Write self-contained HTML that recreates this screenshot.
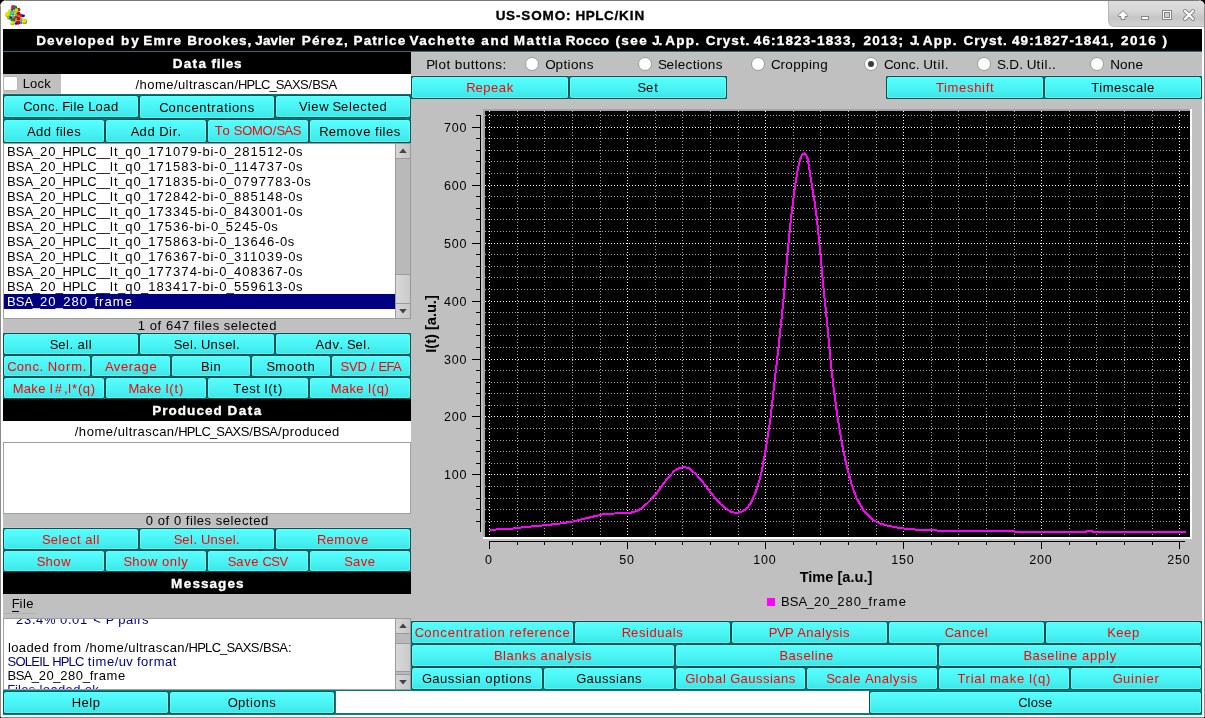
<!DOCTYPE html>
<html><head><meta charset="utf-8"><title>US-SOMO: HPLC/KIN</title>
<style>
html,body{margin:0;padding:0;background:#000;}
body{width:1205px;height:718px;overflow:hidden;position:relative;
font-family:"Liberation Sans",sans-serif;font-size:13px;}
#w{position:absolute;left:0;top:0;width:1205px;height:718px;background:#c0c0c0;overflow:hidden;
border-radius:7px 7px 0 0;will-change:transform;}
#w div,#w svg{position:absolute;box-sizing:border-box;}
.t{white-space:pre;overflow:visible;}
.r{display:inline-block;white-space:pre;text-align:left;overflow:visible;}
.b{background:#007c7c;}
.b i{position:absolute;left:1px;top:1px;right:1px;bottom:1px;border-radius:2.5px;
background:linear-gradient(#6ff 0,#6ff 1px,#56fdfd 1px,#4af4f4 55%,#3ce6e6 100%);
box-shadow:0 0 0 1px #005252,inset 1px 0 0 rgba(120,255,255,.55),inset -1px 0 0 rgba(120,255,255,.55),inset 0 -1px 0 rgba(110,255,255,.5);}
.sb{background:#b9b9b9;border-left:1px solid #9a9a9a;border-right:1px solid #9a9a9a;}
.sbb{background:linear-gradient(90deg,#d6d6d6,#c6c6c6);border:1px solid #9a9a9a;}
.sbt{background:linear-gradient(90deg,#d8d8d8,#cacaca);border:1px solid #9a9a9a;}
</style></head><body><div id="w">

<div style="left:0px;top:0px;width:1205px;height:718px;background:#fff;"></div>
<div style="left:3px;top:29px;width:1199px;height:686px;background:#c0c0c0;"></div>
<div style="left:0px;top:0px;width:1205px;height:1px;background:#7a7a7a;"></div>
<div style="left:0px;top:0px;width:1px;height:718px;background:#8a8a8a;"></div>
<div style="left:1204px;top:0px;width:1px;height:718px;background:#8a8a8a;"></div>
<div style="left:0px;top:717px;width:1205px;height:1px;background:#8a8a8a;"></div>
<div style="left:0px;top:717px;width:1px;height:1px;background:#000;"></div>
<div style="left:1204px;top:717px;width:1px;height:1px;background:#000;"></div>
<div class="t" style="left:420px;top:2px;width:300px;height:28px;line-height:28px;font-size:13.5px;color:#000;text-align:center;font-weight:bold;-webkit-text-stroke:0.35px #000;"><span class="r" style="width:20.07px;letter-spacing:0.66px;text-indent:0.33px">US</span><span class="r" style="width:5.44px;letter-spacing:0.94px;text-indent:0.47px">-</span><span class="r" style="width:44.74px;letter-spacing:0.87px;text-indent:0.44px">SOMO</span><span class="r" style="width:5.24px;letter-spacing:0.74px;text-indent:0.37px">:</span><span class="r" style="width:4.56px"> </span><span class="r" style="width:38.53px;letter-spacing:0.44px;text-indent:0.22px">HPLC</span><span class="r" style="width:4.79px;letter-spacing:1.04px;text-indent:0.52px">/</span><span class="r" style="width:25.99px;letter-spacing:0.91px;text-indent:0.46px">KIN</span></div>
<div style="left:1108px;top:1px;width:96px;height:26px;border-radius:0 0 0 6px;border-left:1px solid #b4b4b4;border-bottom:1px solid #bcbcbc;background:linear-gradient(#dedede 0,#d6d6d6 40%,#c6c6c6 66%,#d2d2d2 100%)"></div>
<svg style="left:1108px;top:1px" width="96" height="26" viewBox="1108 1 96 26">
<path d="M1123 10.5 L1127.6 15.2 L1127.6 16.5 L1125 16.5 L1125 19.5 L1121 19.5 L1121 16.5 L1118.4 16.5 L1118.4 15.2 Z" fill="#fff" stroke="#858585" stroke-width="1" stroke-linejoin="round"/>
<rect x="1141.5" y="16.5" width="7" height="3" fill="#fff" stroke="#858585" stroke-width="1"/>
<rect x="1162.5" y="10.5" width="9" height="9" fill="#fff" stroke="#858585" stroke-width="1"/>
<rect x="1164.5" y="12.5" width="5" height="5" fill="#cfcfcf" stroke="#858585" stroke-width="1"/>
<path d="M1185 11 L1193 19 M1193 11 L1185 19" stroke="#858585" stroke-width="4" stroke-linecap="round"/>
<path d="M1185 11 L1193 19 M1193 11 L1185 19" stroke="#fff" stroke-width="2.2" stroke-linecap="round"/>
</svg>
<svg style="left:0;top:0" width="32" height="29" viewBox="0 0 32 29"><defs>
<radialGradient id="g0" cx="40%" cy="38%" r="65%"><stop offset="0" stop-color="#0000d8"/><stop offset="0.55" stop-color="#0000c8"/><stop offset="1" stop-color="#000076"/></radialGradient>
<radialGradient id="g1" cx="40%" cy="38%" r="65%"><stop offset="0" stop-color="#0000e0"/><stop offset="0.55" stop-color="#0000d0"/><stop offset="1" stop-color="#00007b"/></radialGradient>
<radialGradient id="g2" cx="40%" cy="38%" r="65%"><stop offset="0" stop-color="#0000ee"/><stop offset="0.55" stop-color="#0000dd"/><stop offset="1" stop-color="#000082"/></radialGradient>
<radialGradient id="g3" cx="40%" cy="38%" r="65%"><stop offset="0" stop-color="#00c8c8"/><stop offset="0.55" stop-color="#00baba"/><stop offset="1" stop-color="#006e6e"/></radialGradient>
<radialGradient id="g4" cx="40%" cy="38%" r="65%"><stop offset="0" stop-color="#00d0d0"/><stop offset="0.55" stop-color="#00c1c1"/><stop offset="1" stop-color="#007272"/></radialGradient>
<radialGradient id="g5" cx="40%" cy="38%" r="65%"><stop offset="0" stop-color="#00d8d8"/><stop offset="0.55" stop-color="#00c8c8"/><stop offset="1" stop-color="#007676"/></radialGradient>
<radialGradient id="g6" cx="40%" cy="38%" r="65%"><stop offset="0" stop-color="#00e8e8"/><stop offset="0.55" stop-color="#00d7d7"/><stop offset="1" stop-color="#007f7f"/></radialGradient>
<radialGradient id="g7" cx="40%" cy="38%" r="65%"><stop offset="0" stop-color="#1e8050"/><stop offset="0.55" stop-color="#1b774a"/><stop offset="1" stop-color="#10462c"/></radialGradient>
<radialGradient id="g8" cx="40%" cy="38%" r="65%"><stop offset="0" stop-color="#6070ff"/><stop offset="0.55" stop-color="#5968ed"/><stop offset="1" stop-color="#343d8c"/></radialGradient>
<radialGradient id="g9" cx="40%" cy="38%" r="65%"><stop offset="0" stop-color="#60e060"/><stop offset="0.55" stop-color="#59d059"/><stop offset="1" stop-color="#347b34"/></radialGradient>
<radialGradient id="g10" cx="40%" cy="38%" r="65%"><stop offset="0" stop-color="#d0d000"/><stop offset="0.55" stop-color="#c1c100"/><stop offset="1" stop-color="#727200"/></radialGradient>
<radialGradient id="g11" cx="40%" cy="38%" r="65%"><stop offset="0" stop-color="#d8d800"/><stop offset="0.55" stop-color="#c8c800"/><stop offset="1" stop-color="#767600"/></radialGradient>
<radialGradient id="g12" cx="40%" cy="38%" r="65%"><stop offset="0" stop-color="#e000e0"/><stop offset="0.55" stop-color="#d000d0"/><stop offset="1" stop-color="#7b007b"/></radialGradient>
<radialGradient id="g13" cx="40%" cy="38%" r="65%"><stop offset="0" stop-color="#e0e000"/><stop offset="0.55" stop-color="#d0d000"/><stop offset="1" stop-color="#7b7b00"/></radialGradient>
<radialGradient id="g14" cx="40%" cy="38%" r="65%"><stop offset="0" stop-color="#e8e800"/><stop offset="0.55" stop-color="#d7d700"/><stop offset="1" stop-color="#7f7f00"/></radialGradient>
<radialGradient id="g15" cx="40%" cy="38%" r="65%"><stop offset="0" stop-color="#ee0000"/><stop offset="0.55" stop-color="#dd0000"/><stop offset="1" stop-color="#820000"/></radialGradient>
<radialGradient id="g16" cx="40%" cy="38%" r="65%"><stop offset="0" stop-color="#ee1010"/><stop offset="0.55" stop-color="#dd0e0e"/><stop offset="1" stop-color="#820808"/></radialGradient>
<radialGradient id="g17" cx="40%" cy="38%" r="65%"><stop offset="0" stop-color="#eeee00"/><stop offset="0.55" stop-color="#dddd00"/><stop offset="1" stop-color="#828200"/></radialGradient>
<radialGradient id="g18" cx="40%" cy="38%" r="65%"><stop offset="0" stop-color="#f0f000"/><stop offset="0.55" stop-color="#dfdf00"/><stop offset="1" stop-color="#848400"/></radialGradient>
<radialGradient id="g19" cx="40%" cy="38%" r="65%"><stop offset="0" stop-color="#ff9000"/><stop offset="0.55" stop-color="#ed8500"/><stop offset="1" stop-color="#8c4f00"/></radialGradient>
</defs>
<circle cx="13.1" cy="7" r="2.07" fill="url(#g12)"/>
<circle cx="15" cy="7.9" r="2.3" fill="url(#g7)"/>
<circle cx="18.4" cy="9.6" r="1.955" fill="url(#g16)"/>
<circle cx="12" cy="9.7" r="1.38" fill="url(#g16)"/>
<circle cx="9.8" cy="10.7" r="1.725" fill="url(#g18)"/>
<circle cx="16.5" cy="10.4" r="2.07" fill="url(#g14)"/>
<circle cx="7.9" cy="14.5" r="2.76" fill="url(#g17)"/>
<circle cx="12.3" cy="13" r="2.3" fill="url(#g6)"/>
<circle cx="15.3" cy="13.3" r="1.725" fill="url(#g13)"/>
<circle cx="18.6" cy="13.8" r="1.955" fill="url(#g15)"/>
<circle cx="21.3" cy="15.5" r="1.725" fill="url(#g16)"/>
<circle cx="23.5" cy="15.8" r="1.38" fill="url(#g2)"/>
<circle cx="16.5" cy="15.7" r="1.495" fill="url(#g4)"/>
<circle cx="13.2" cy="16.2" r="1.265" fill="url(#g19)"/>
<circle cx="10.5" cy="17.7" r="1.61" fill="url(#g1)"/>
<circle cx="8.5" cy="18" r="1.38" fill="url(#g11)"/>
<circle cx="15.7" cy="17.4" r="1.495" fill="url(#g16)"/>
<circle cx="18.5" cy="18.4" r="2.07" fill="url(#g15)"/>
<circle cx="21.4" cy="18.7" r="1.15" fill="url(#g19)"/>
<circle cx="13" cy="19.8" r="2.415" fill="url(#g7)"/>
<circle cx="16" cy="20.8" r="1.265" fill="url(#g19)"/>
<circle cx="21" cy="20.5" r="1.265" fill="url(#g5)"/>
<circle cx="24.5" cy="21.4" r="2.645" fill="url(#g17)"/>
<circle cx="18.3" cy="22.6" r="2.07" fill="url(#g15)"/>
<circle cx="12.4" cy="22.9" r="2.185" fill="url(#g17)"/>
<circle cx="16.1" cy="23.4" r="1.265" fill="url(#g0)"/>
<circle cx="21" cy="23" r="1.15" fill="url(#g8)"/>
<circle cx="14.2" cy="11.3" r="0.92" fill="url(#g19)"/>
<circle cx="10.4" cy="15.9" r="0.92" fill="url(#g9)"/>
<circle cx="10.3" cy="19.2" r="1.035" fill="url(#g3)"/>
<circle cx="8.2" cy="17.6" r="1.265" fill="url(#g10)"/>
<circle cx="16.3" cy="18.9" r="0.92" fill="url(#g9)"/>
</svg>
<div style="left:3px;top:29px;width:1199px;height:22px;background:#000;"></div>
<div style="left:3px;top:51px;width:1199px;height:1px;background:#008080;"></div>
<div class="t" style="left:36.20px;top:30px;height:22px;line-height:22px;font-size:13.5px;letter-spacing:1.179px;color:#fff;font-weight:bold;-webkit-text-stroke:0.35px #fff;">Developed</div>
<div class="t" style="left:120.90px;top:30px;height:22px;line-height:22px;font-size:13.5px;letter-spacing:2.015px;color:#fff;font-weight:bold;-webkit-text-stroke:0.35px #fff;">by</div>
<div class="t" style="left:143.30px;top:30px;height:22px;line-height:22px;font-size:13.5px;letter-spacing:1.317px;color:#fff;font-weight:bold;-webkit-text-stroke:0.35px #fff;">Emre</div>
<div class="t" style="left:187.30px;top:30px;height:22px;line-height:22px;font-size:13.5px;letter-spacing:0.883px;color:#fff;font-weight:bold;-webkit-text-stroke:0.35px #fff;">Brookes,</div>
<div class="t" style="left:255.30px;top:30px;height:22px;line-height:22px;font-size:13.5px;letter-spacing:0.135px;color:#fff;font-weight:bold;-webkit-text-stroke:0.35px #fff;">Javier</div>
<div class="t" style="left:301.80px;top:30px;height:22px;line-height:22px;font-size:13.5px;letter-spacing:1.239px;color:#fff;font-weight:bold;-webkit-text-stroke:0.35px #fff;">Pérez,</div>
<div class="t" style="left:353.60px;top:30px;height:22px;line-height:22px;font-size:13.5px;letter-spacing:1.087px;color:#fff;font-weight:bold;-webkit-text-stroke:0.35px #fff;">Patrice</div>
<div class="t" style="left:409.60px;top:30px;height:22px;line-height:22px;font-size:13.5px;letter-spacing:1.378px;color:#fff;font-weight:bold;-webkit-text-stroke:0.35px #fff;">Vachette</div>
<div class="t" style="left:481.30px;top:30px;height:22px;line-height:22px;font-size:13.5px;letter-spacing:1.635px;color:#fff;font-weight:bold;-webkit-text-stroke:0.35px #fff;">and</div>
<div class="t" style="left:513.70px;top:30px;height:22px;line-height:22px;font-size:13.5px;letter-spacing:1.634px;color:#fff;font-weight:bold;-webkit-text-stroke:0.35px #fff;">Mattia</div>
<div class="t" style="left:565.70px;top:30px;height:22px;line-height:22px;font-size:13.5px;letter-spacing:0.495px;color:#fff;font-weight:bold;-webkit-text-stroke:0.35px #fff;">Rocco</div>
<div class="t" style="left:615.40px;top:30px;height:22px;line-height:22px;font-size:13.5px;letter-spacing:1.443px;color:#fff;font-weight:bold;-webkit-text-stroke:0.35px #fff;">(see</div>
<div class="t" style="left:652.30px;top:30px;height:22px;line-height:22px;font-size:13.5px;letter-spacing:-1.404px;color:#fff;font-weight:bold;-webkit-text-stroke:0.35px #fff;">J.</div>
<div class="t" style="left:665.20px;top:30px;height:22px;line-height:22px;font-size:13.5px;letter-spacing:1.233px;color:#fff;font-weight:bold;-webkit-text-stroke:0.35px #fff;">App.</div>
<div class="t" style="left:705.80px;top:30px;height:22px;line-height:22px;font-size:13.5px;letter-spacing:1.017px;color:#fff;font-weight:bold;-webkit-text-stroke:0.35px #fff;">Cryst.</div>
<div class="t" style="left:753.80px;top:30px;height:22px;line-height:22px;font-size:13.5px;letter-spacing:1.143px;color:#fff;font-weight:bold;-webkit-text-stroke:0.35px #fff;">46:1823-1833,</div>
<div class="t" style="left:863.40px;top:30px;height:22px;line-height:22px;font-size:13.5px;letter-spacing:1.258px;color:#fff;font-weight:bold;-webkit-text-stroke:0.35px #fff;">2013;</div>
<div class="t" style="left:909.90px;top:30px;height:22px;line-height:22px;font-size:13.5px;letter-spacing:-1.404px;color:#fff;font-weight:bold;-webkit-text-stroke:0.35px #fff;">J.</div>
<div class="t" style="left:922.80px;top:30px;height:22px;line-height:22px;font-size:13.5px;letter-spacing:1.233px;color:#fff;font-weight:bold;-webkit-text-stroke:0.35px #fff;">App.</div>
<div class="t" style="left:963.40px;top:30px;height:22px;line-height:22px;font-size:13.5px;letter-spacing:1.017px;color:#fff;font-weight:bold;-webkit-text-stroke:0.35px #fff;">Cryst.</div>
<div class="t" style="left:1011.90px;top:30px;height:22px;line-height:22px;font-size:13.5px;letter-spacing:1.143px;color:#fff;font-weight:bold;-webkit-text-stroke:0.35px #fff;">49:1827-1841,</div>
<div class="t" style="left:1121.00px;top:30px;height:22px;line-height:22px;font-size:13.5px;letter-spacing:1.547px;color:#fff;font-weight:bold;-webkit-text-stroke:0.35px #fff;">2016</div>
<div class="t" style="left:1162.50px;top:30px;height:22px;line-height:22px;font-size:13.5px;letter-spacing:1.525px;color:#fff;font-weight:bold;-webkit-text-stroke:0.35px #fff;">)</div>
<div style="left:3px;top:52px;width:408px;height:22px;background:#000;"></div>
<div class="t" style="left:3px;top:53px;width:408px;height:22px;line-height:22px;font-size:13.5px;color:#fff;text-align:center;font-weight:bold;-webkit-text-stroke:0.35px #fff;"><span class="r" style="width:10.79px;letter-spacing:1.04px;text-indent:0.52px">D</span><span class="r" style="width:23.76px;letter-spacing:1.42px;text-indent:0.71px">ata</span><span class="r" style="width:4.53px"> </span><span class="r" style="width:30.65px;letter-spacing:0.73px;text-indent:0.36px">files</span></div>
<div style="left:3px;top:74px;width:58px;height:20px;background:#c0c0c0;"></div>
<div style="left:61px;top:74px;width:350px;height:21px;background:#fff;"></div>
<div style="left:3px;top:76px;width:15px;height:15px;background:#fff;border:1px solid #b4b4b4;border-radius:2px"></div>
<div class="t" style="left:23px;top:74px;width:40px;height:20px;line-height:20px;font-size:13px;color:#000;text-align:left;"><span class="r" style="width:6.80px;letter-spacing:-0.43px;text-indent:-0.22px">L</span><span class="r" style="width:21.24px;letter-spacing:0.34px;text-indent:0.17px">ock</span></div>
<div class="t" style="left:61px;top:74px;width:350px;height:21px;line-height:21px;font-size:13px;color:#000;text-align:center;"><span class="r" style="width:4.09px;letter-spacing:0.48px;text-indent:0.24px">/</span><span class="r" style="width:34.45px;letter-spacing:0.48px;text-indent:0.24px">home</span><span class="r" style="width:4.09px;letter-spacing:0.48px;text-indent:0.24px">/</span><span class="r" style="width:56.43px;letter-spacing:0.41px;text-indent:0.20px">ultrascan</span><span class="r" style="width:4.09px;letter-spacing:0.48px;text-indent:0.24px">/</span><span class="r" style="width:31.72px;letter-spacing:-0.74px;text-indent:-0.37px">HPLC</span><span class="r" style="width:6.08px;letter-spacing:-1.15px;text-indent:-0.58px">_</span><span class="r" style="width:32.29px;letter-spacing:-0.60px;text-indent:-0.30px">SAXS</span><span class="r" style="width:4.09px;letter-spacing:0.48px;text-indent:0.24px">/</span><span class="r" style="width:24.37px;letter-spacing:-0.55px;text-indent:-0.27px">BSA</span></div>
<div style="left:3px;top:93px;width:58px;height:1px;background:#cfc6c6;"></div>
<div style="left:3px;top:332px;width:408px;height:1px;background:#cfc6c6;"></div>
<div style="left:3px;top:527px;width:408px;height:1px;background:#cfc6c6;"></div>
<div style="left:3px;top:94px;width:408px;height:49px;background:#007878;"></div>
<div class="b" style="left:3px;top:95px;width:136px;height:23px"><i></i></div>
<div class="t" style="left:3px;top:95px;width:136px;height:23px;line-height:23px;font-size:13px;color:#000;text-align:center;"><span class="r" style="width:8.73px;letter-spacing:-0.66px;text-indent:-0.33px">C</span><span class="r" style="width:22.44px;letter-spacing:0.49px;text-indent:0.25px">onc</span><span class="r" style="width:3.97px;letter-spacing:0.36px;text-indent:0.18px">.</span><span class="r" style="width:3.97px"> </span><span class="r" style="width:7.19px;letter-spacing:-0.75px;text-indent:-0.38px">F</span><span class="r" style="width:14.64px;letter-spacing:0.54px;text-indent:0.27px">ile</span><span class="r" style="width:3.97px"> </span><span class="r" style="width:6.96px;letter-spacing:-0.26px;text-indent:-0.13px">L</span><span class="r" style="width:23.24px;letter-spacing:0.52px;text-indent:0.26px">oad</span></div>
<div class="b" style="left:139px;top:95px;width:136px;height:24px"><i></i></div>
<div class="t" style="left:139px;top:96px;width:136px;height:24px;line-height:24px;font-size:13px;color:#000;text-align:center;"><span class="r" style="width:8.73px;letter-spacing:-0.66px;text-indent:-0.33px">C</span><span class="r" style="width:86.21px;letter-spacing:0.63px;text-indent:0.31px">oncentrations</span></div>
<div class="b" style="left:275px;top:95px;width:136px;height:23px"><i></i></div>
<div class="t" style="left:275px;top:95px;width:136px;height:23px;line-height:23px;font-size:13px;color:#000;text-align:center;"><span class="r" style="width:8.55px;letter-spacing:-0.12px;text-indent:-0.06px">V</span><span class="r" style="width:21.39px;letter-spacing:0.63px;text-indent:0.31px">iew</span><span class="r" style="width:3.97px"> </span><span class="r" style="width:7.94px;letter-spacing:-0.74px;text-indent:-0.37px">S</span><span class="r" style="width:46.26px;letter-spacing:0.62px;text-indent:0.31px">elected</span></div>
<div class="b" style="left:3px;top:119px;width:102px;height:24px"><i></i></div>
<div class="t" style="left:3px;top:120px;width:102px;height:24px;line-height:24px;font-size:13px;color:#000;text-align:center;"><span class="r" style="width:8.55px;letter-spacing:-0.12px;text-indent:-0.06px">A</span><span class="r" style="width:15.87px;letter-spacing:0.71px;text-indent:0.35px">dd</span><span class="r" style="width:3.97px"> </span><span class="r" style="width:25.55px;letter-spacing:0.49px;text-indent:0.24px">files</span></div>
<div class="b" style="left:105px;top:119px;width:102px;height:24px"><i></i></div>
<div class="t" style="left:105px;top:120px;width:102px;height:24px;line-height:24px;font-size:13px;color:#000;text-align:center;"><span class="r" style="width:8.55px;letter-spacing:-0.12px;text-indent:-0.06px">A</span><span class="r" style="width:15.87px;letter-spacing:0.71px;text-indent:0.35px">dd</span><span class="r" style="width:3.97px"> </span><span class="r" style="width:9.62px;letter-spacing:0.24px;text-indent:0.12px">D</span><span class="r" style="width:8.61px;letter-spacing:0.70px;text-indent:0.35px">ir</span><span class="r" style="width:3.97px;letter-spacing:0.36px;text-indent:0.18px">.</span></div>
<div class="b" style="left:207px;top:119px;width:102px;height:24px"><i></i></div>
<div class="t" style="left:207px;top:119px;width:102px;height:24px;line-height:24px;font-size:13px;color:#f00;text-align:center;"><span class="r" style="width:7.63px;letter-spacing:-0.31px;text-indent:-0.15px">T</span><span class="r" style="width:7.65px;letter-spacing:0.42px;text-indent:0.21px">o</span><span class="r" style="width:3.97px"> </span><span class="r" style="width:38.40px;letter-spacing:-0.33px;text-indent:-0.17px">SOMO</span><span class="r" style="width:4.21px;letter-spacing:0.60px;text-indent:0.30px">/</span><span class="r" style="width:24.65px;letter-spacing:-0.45px;text-indent:-0.23px">SAS</span></div>
<div class="b" style="left:309px;top:119px;width:102px;height:24px"><i></i></div>
<div class="t" style="left:309px;top:120px;width:102px;height:24px;line-height:24px;font-size:13px;color:#000;text-align:center;"><span class="r" style="width:8.69px;letter-spacing:-0.70px;text-indent:-0.35px">R</span><span class="r" style="width:42.61px;letter-spacing:0.72px;text-indent:0.36px">emove</span><span class="r" style="width:3.97px"> </span><span class="r" style="width:25.55px;letter-spacing:0.49px;text-indent:0.24px">files</span></div>
<div style="left:3px;top:143px;width:408px;height:176px;background:#fff;border:1px solid #a0a0a0"></div>
<div style="left:4px;top:294px;width:391px;height:15px;background:#000080;"></div>
<div class="t" style="left:7px;top:144px;width:380px;height:15px;line-height:15px;font-size:13px;color:#000;text-align:left;"><span class="r" style="width:26.08px;letter-spacing:0.02px;text-indent:0.01px">BSA</span><span class="r" style="width:6.50px;letter-spacing:-0.73px;text-indent:-0.36px">_</span><span class="r" style="width:16.54px;letter-spacing:1.04px;text-indent:0.52px">20</span><span class="r" style="width:6.50px;letter-spacing:-0.73px;text-indent:-0.36px">_</span><span class="r" style="width:33.94px;letter-spacing:-0.19px;text-indent:-0.09px">HPLC</span><span class="r" style="width:6.50px;letter-spacing:-0.73px;text-indent:-0.36px">_</span><span class="r" style="width:6.50px;letter-spacing:-0.73px;text-indent:-0.36px">_</span><span class="r" style="width:8.71px;letter-spacing:1.10px;text-indent:0.55px">lt</span><span class="r" style="width:6.50px;letter-spacing:-0.73px;text-indent:-0.36px">_</span><span class="r" style="width:8.25px;letter-spacing:1.02px;text-indent:0.51px">q</span><span class="r" style="width:8.27px;letter-spacing:1.04px;text-indent:0.52px">0</span><span class="r" style="width:6.50px;letter-spacing:-0.73px;text-indent:-0.36px">_</span><span class="r" style="width:49.63px;letter-spacing:1.04px;text-indent:0.52px">171079</span><span class="r" style="width:4.69px;letter-spacing:0.36px;text-indent:0.18px">-</span><span class="r" style="width:11.86px;letter-spacing:0.87px;text-indent:0.44px">bi</span><span class="r" style="width:4.69px;letter-spacing:0.36px;text-indent:0.18px">-</span><span class="r" style="width:8.27px;letter-spacing:1.04px;text-indent:0.52px">0</span><span class="r" style="width:6.50px;letter-spacing:-0.73px;text-indent:-0.36px">_</span><span class="r" style="width:49.63px;letter-spacing:1.04px;text-indent:0.52px">281512</span><span class="r" style="width:4.69px;letter-spacing:0.36px;text-indent:0.18px">-</span><span class="r" style="width:8.27px;letter-spacing:1.04px;text-indent:0.52px">0</span><span class="r" style="width:6.77px;letter-spacing:0.27px;text-indent:0.14px">s</span></div>
<div class="t" style="left:7px;top:159px;width:380px;height:15px;line-height:15px;font-size:13px;color:#000;text-align:left;"><span class="r" style="width:26.08px;letter-spacing:0.02px;text-indent:0.01px">BSA</span><span class="r" style="width:6.50px;letter-spacing:-0.73px;text-indent:-0.36px">_</span><span class="r" style="width:16.54px;letter-spacing:1.04px;text-indent:0.52px">20</span><span class="r" style="width:6.50px;letter-spacing:-0.73px;text-indent:-0.36px">_</span><span class="r" style="width:33.94px;letter-spacing:-0.19px;text-indent:-0.09px">HPLC</span><span class="r" style="width:6.50px;letter-spacing:-0.73px;text-indent:-0.36px">_</span><span class="r" style="width:6.50px;letter-spacing:-0.73px;text-indent:-0.36px">_</span><span class="r" style="width:8.71px;letter-spacing:1.10px;text-indent:0.55px">lt</span><span class="r" style="width:6.50px;letter-spacing:-0.73px;text-indent:-0.36px">_</span><span class="r" style="width:8.25px;letter-spacing:1.02px;text-indent:0.51px">q</span><span class="r" style="width:8.27px;letter-spacing:1.04px;text-indent:0.52px">0</span><span class="r" style="width:6.50px;letter-spacing:-0.73px;text-indent:-0.36px">_</span><span class="r" style="width:49.63px;letter-spacing:1.04px;text-indent:0.52px">171583</span><span class="r" style="width:4.69px;letter-spacing:0.36px;text-indent:0.18px">-</span><span class="r" style="width:11.86px;letter-spacing:0.87px;text-indent:0.44px">bi</span><span class="r" style="width:4.69px;letter-spacing:0.36px;text-indent:0.18px">-</span><span class="r" style="width:8.27px;letter-spacing:1.04px;text-indent:0.52px">0</span><span class="r" style="width:6.50px;letter-spacing:-0.73px;text-indent:-0.36px">_</span><span class="r" style="width:49.63px;letter-spacing:1.20px;text-indent:0.60px">114737</span><span class="r" style="width:4.69px;letter-spacing:0.36px;text-indent:0.18px">-</span><span class="r" style="width:8.27px;letter-spacing:1.04px;text-indent:0.52px">0</span><span class="r" style="width:6.77px;letter-spacing:0.27px;text-indent:0.14px">s</span></div>
<div class="t" style="left:7px;top:174px;width:380px;height:15px;line-height:15px;font-size:13px;color:#000;text-align:left;"><span class="r" style="width:26.08px;letter-spacing:0.02px;text-indent:0.01px">BSA</span><span class="r" style="width:6.50px;letter-spacing:-0.73px;text-indent:-0.36px">_</span><span class="r" style="width:16.54px;letter-spacing:1.04px;text-indent:0.52px">20</span><span class="r" style="width:6.50px;letter-spacing:-0.73px;text-indent:-0.36px">_</span><span class="r" style="width:33.94px;letter-spacing:-0.19px;text-indent:-0.09px">HPLC</span><span class="r" style="width:6.50px;letter-spacing:-0.73px;text-indent:-0.36px">_</span><span class="r" style="width:6.50px;letter-spacing:-0.73px;text-indent:-0.36px">_</span><span class="r" style="width:8.71px;letter-spacing:1.10px;text-indent:0.55px">lt</span><span class="r" style="width:6.50px;letter-spacing:-0.73px;text-indent:-0.36px">_</span><span class="r" style="width:8.25px;letter-spacing:1.02px;text-indent:0.51px">q</span><span class="r" style="width:8.27px;letter-spacing:1.04px;text-indent:0.52px">0</span><span class="r" style="width:6.50px;letter-spacing:-0.73px;text-indent:-0.36px">_</span><span class="r" style="width:49.63px;letter-spacing:1.04px;text-indent:0.52px">171835</span><span class="r" style="width:4.69px;letter-spacing:0.36px;text-indent:0.18px">-</span><span class="r" style="width:11.86px;letter-spacing:0.87px;text-indent:0.44px">bi</span><span class="r" style="width:4.69px;letter-spacing:0.36px;text-indent:0.18px">-</span><span class="r" style="width:8.27px;letter-spacing:1.04px;text-indent:0.52px">0</span><span class="r" style="width:6.50px;letter-spacing:-0.73px;text-indent:-0.36px">_</span><span class="r" style="width:57.90px;letter-spacing:1.04px;text-indent:0.52px">0797783</span><span class="r" style="width:4.69px;letter-spacing:0.36px;text-indent:0.18px">-</span><span class="r" style="width:8.27px;letter-spacing:1.04px;text-indent:0.52px">0</span><span class="r" style="width:6.77px;letter-spacing:0.27px;text-indent:0.14px">s</span></div>
<div class="t" style="left:7px;top:189px;width:380px;height:15px;line-height:15px;font-size:13px;color:#000;text-align:left;"><span class="r" style="width:26.08px;letter-spacing:0.02px;text-indent:0.01px">BSA</span><span class="r" style="width:6.50px;letter-spacing:-0.73px;text-indent:-0.36px">_</span><span class="r" style="width:16.54px;letter-spacing:1.04px;text-indent:0.52px">20</span><span class="r" style="width:6.50px;letter-spacing:-0.73px;text-indent:-0.36px">_</span><span class="r" style="width:33.94px;letter-spacing:-0.19px;text-indent:-0.09px">HPLC</span><span class="r" style="width:6.50px;letter-spacing:-0.73px;text-indent:-0.36px">_</span><span class="r" style="width:6.50px;letter-spacing:-0.73px;text-indent:-0.36px">_</span><span class="r" style="width:8.71px;letter-spacing:1.10px;text-indent:0.55px">lt</span><span class="r" style="width:6.50px;letter-spacing:-0.73px;text-indent:-0.36px">_</span><span class="r" style="width:8.25px;letter-spacing:1.02px;text-indent:0.51px">q</span><span class="r" style="width:8.27px;letter-spacing:1.04px;text-indent:0.52px">0</span><span class="r" style="width:6.50px;letter-spacing:-0.73px;text-indent:-0.36px">_</span><span class="r" style="width:49.63px;letter-spacing:1.04px;text-indent:0.52px">172842</span><span class="r" style="width:4.69px;letter-spacing:0.36px;text-indent:0.18px">-</span><span class="r" style="width:11.86px;letter-spacing:0.87px;text-indent:0.44px">bi</span><span class="r" style="width:4.69px;letter-spacing:0.36px;text-indent:0.18px">-</span><span class="r" style="width:8.27px;letter-spacing:1.04px;text-indent:0.52px">0</span><span class="r" style="width:6.50px;letter-spacing:-0.73px;text-indent:-0.36px">_</span><span class="r" style="width:49.63px;letter-spacing:1.04px;text-indent:0.52px">885148</span><span class="r" style="width:4.69px;letter-spacing:0.36px;text-indent:0.18px">-</span><span class="r" style="width:8.27px;letter-spacing:1.04px;text-indent:0.52px">0</span><span class="r" style="width:6.77px;letter-spacing:0.27px;text-indent:0.14px">s</span></div>
<div class="t" style="left:7px;top:204px;width:380px;height:15px;line-height:15px;font-size:13px;color:#000;text-align:left;"><span class="r" style="width:26.08px;letter-spacing:0.02px;text-indent:0.01px">BSA</span><span class="r" style="width:6.50px;letter-spacing:-0.73px;text-indent:-0.36px">_</span><span class="r" style="width:16.54px;letter-spacing:1.04px;text-indent:0.52px">20</span><span class="r" style="width:6.50px;letter-spacing:-0.73px;text-indent:-0.36px">_</span><span class="r" style="width:33.94px;letter-spacing:-0.19px;text-indent:-0.09px">HPLC</span><span class="r" style="width:6.50px;letter-spacing:-0.73px;text-indent:-0.36px">_</span><span class="r" style="width:6.50px;letter-spacing:-0.73px;text-indent:-0.36px">_</span><span class="r" style="width:8.71px;letter-spacing:1.10px;text-indent:0.55px">lt</span><span class="r" style="width:6.50px;letter-spacing:-0.73px;text-indent:-0.36px">_</span><span class="r" style="width:8.25px;letter-spacing:1.02px;text-indent:0.51px">q</span><span class="r" style="width:8.27px;letter-spacing:1.04px;text-indent:0.52px">0</span><span class="r" style="width:6.50px;letter-spacing:-0.73px;text-indent:-0.36px">_</span><span class="r" style="width:49.63px;letter-spacing:1.04px;text-indent:0.52px">173345</span><span class="r" style="width:4.69px;letter-spacing:0.36px;text-indent:0.18px">-</span><span class="r" style="width:11.86px;letter-spacing:0.87px;text-indent:0.44px">bi</span><span class="r" style="width:4.69px;letter-spacing:0.36px;text-indent:0.18px">-</span><span class="r" style="width:8.27px;letter-spacing:1.04px;text-indent:0.52px">0</span><span class="r" style="width:6.50px;letter-spacing:-0.73px;text-indent:-0.36px">_</span><span class="r" style="width:49.63px;letter-spacing:1.04px;text-indent:0.52px">843001</span><span class="r" style="width:4.69px;letter-spacing:0.36px;text-indent:0.18px">-</span><span class="r" style="width:8.27px;letter-spacing:1.04px;text-indent:0.52px">0</span><span class="r" style="width:6.77px;letter-spacing:0.27px;text-indent:0.14px">s</span></div>
<div class="t" style="left:7px;top:219px;width:380px;height:15px;line-height:15px;font-size:13px;color:#000;text-align:left;"><span class="r" style="width:26.08px;letter-spacing:0.02px;text-indent:0.01px">BSA</span><span class="r" style="width:6.50px;letter-spacing:-0.73px;text-indent:-0.36px">_</span><span class="r" style="width:16.54px;letter-spacing:1.04px;text-indent:0.52px">20</span><span class="r" style="width:6.50px;letter-spacing:-0.73px;text-indent:-0.36px">_</span><span class="r" style="width:33.94px;letter-spacing:-0.19px;text-indent:-0.09px">HPLC</span><span class="r" style="width:6.50px;letter-spacing:-0.73px;text-indent:-0.36px">_</span><span class="r" style="width:6.50px;letter-spacing:-0.73px;text-indent:-0.36px">_</span><span class="r" style="width:8.71px;letter-spacing:1.10px;text-indent:0.55px">lt</span><span class="r" style="width:6.50px;letter-spacing:-0.73px;text-indent:-0.36px">_</span><span class="r" style="width:8.25px;letter-spacing:1.02px;text-indent:0.51px">q</span><span class="r" style="width:8.27px;letter-spacing:1.04px;text-indent:0.52px">0</span><span class="r" style="width:6.50px;letter-spacing:-0.73px;text-indent:-0.36px">_</span><span class="r" style="width:41.36px;letter-spacing:1.04px;text-indent:0.52px">17536</span><span class="r" style="width:4.69px;letter-spacing:0.36px;text-indent:0.18px">-</span><span class="r" style="width:11.86px;letter-spacing:0.87px;text-indent:0.44px">bi</span><span class="r" style="width:4.69px;letter-spacing:0.36px;text-indent:0.18px">-</span><span class="r" style="width:8.27px;letter-spacing:1.04px;text-indent:0.52px">0</span><span class="r" style="width:6.50px;letter-spacing:-0.73px;text-indent:-0.36px">_</span><span class="r" style="width:33.09px;letter-spacing:1.04px;text-indent:0.52px">5245</span><span class="r" style="width:4.69px;letter-spacing:0.36px;text-indent:0.18px">-</span><span class="r" style="width:8.27px;letter-spacing:1.04px;text-indent:0.52px">0</span><span class="r" style="width:6.77px;letter-spacing:0.27px;text-indent:0.14px">s</span></div>
<div class="t" style="left:7px;top:234px;width:380px;height:15px;line-height:15px;font-size:13px;color:#000;text-align:left;"><span class="r" style="width:26.08px;letter-spacing:0.02px;text-indent:0.01px">BSA</span><span class="r" style="width:6.50px;letter-spacing:-0.73px;text-indent:-0.36px">_</span><span class="r" style="width:16.54px;letter-spacing:1.04px;text-indent:0.52px">20</span><span class="r" style="width:6.50px;letter-spacing:-0.73px;text-indent:-0.36px">_</span><span class="r" style="width:33.94px;letter-spacing:-0.19px;text-indent:-0.09px">HPLC</span><span class="r" style="width:6.50px;letter-spacing:-0.73px;text-indent:-0.36px">_</span><span class="r" style="width:6.50px;letter-spacing:-0.73px;text-indent:-0.36px">_</span><span class="r" style="width:8.71px;letter-spacing:1.10px;text-indent:0.55px">lt</span><span class="r" style="width:6.50px;letter-spacing:-0.73px;text-indent:-0.36px">_</span><span class="r" style="width:8.25px;letter-spacing:1.02px;text-indent:0.51px">q</span><span class="r" style="width:8.27px;letter-spacing:1.04px;text-indent:0.52px">0</span><span class="r" style="width:6.50px;letter-spacing:-0.73px;text-indent:-0.36px">_</span><span class="r" style="width:49.63px;letter-spacing:1.04px;text-indent:0.52px">175863</span><span class="r" style="width:4.69px;letter-spacing:0.36px;text-indent:0.18px">-</span><span class="r" style="width:11.86px;letter-spacing:0.87px;text-indent:0.44px">bi</span><span class="r" style="width:4.69px;letter-spacing:0.36px;text-indent:0.18px">-</span><span class="r" style="width:8.27px;letter-spacing:1.04px;text-indent:0.52px">0</span><span class="r" style="width:6.50px;letter-spacing:-0.73px;text-indent:-0.36px">_</span><span class="r" style="width:41.36px;letter-spacing:1.04px;text-indent:0.52px">13646</span><span class="r" style="width:4.69px;letter-spacing:0.36px;text-indent:0.18px">-</span><span class="r" style="width:8.27px;letter-spacing:1.04px;text-indent:0.52px">0</span><span class="r" style="width:6.77px;letter-spacing:0.27px;text-indent:0.14px">s</span></div>
<div class="t" style="left:7px;top:249px;width:380px;height:15px;line-height:15px;font-size:13px;color:#000;text-align:left;"><span class="r" style="width:26.08px;letter-spacing:0.02px;text-indent:0.01px">BSA</span><span class="r" style="width:6.50px;letter-spacing:-0.73px;text-indent:-0.36px">_</span><span class="r" style="width:16.54px;letter-spacing:1.04px;text-indent:0.52px">20</span><span class="r" style="width:6.50px;letter-spacing:-0.73px;text-indent:-0.36px">_</span><span class="r" style="width:33.94px;letter-spacing:-0.19px;text-indent:-0.09px">HPLC</span><span class="r" style="width:6.50px;letter-spacing:-0.73px;text-indent:-0.36px">_</span><span class="r" style="width:6.50px;letter-spacing:-0.73px;text-indent:-0.36px">_</span><span class="r" style="width:8.71px;letter-spacing:1.10px;text-indent:0.55px">lt</span><span class="r" style="width:6.50px;letter-spacing:-0.73px;text-indent:-0.36px">_</span><span class="r" style="width:8.25px;letter-spacing:1.02px;text-indent:0.51px">q</span><span class="r" style="width:8.27px;letter-spacing:1.04px;text-indent:0.52px">0</span><span class="r" style="width:6.50px;letter-spacing:-0.73px;text-indent:-0.36px">_</span><span class="r" style="width:49.63px;letter-spacing:1.04px;text-indent:0.52px">176367</span><span class="r" style="width:4.69px;letter-spacing:0.36px;text-indent:0.18px">-</span><span class="r" style="width:11.86px;letter-spacing:0.87px;text-indent:0.44px">bi</span><span class="r" style="width:4.69px;letter-spacing:0.36px;text-indent:0.18px">-</span><span class="r" style="width:8.27px;letter-spacing:1.04px;text-indent:0.52px">0</span><span class="r" style="width:6.50px;letter-spacing:-0.73px;text-indent:-0.36px">_</span><span class="r" style="width:49.63px;letter-spacing:1.20px;text-indent:0.60px">311039</span><span class="r" style="width:4.69px;letter-spacing:0.36px;text-indent:0.18px">-</span><span class="r" style="width:8.27px;letter-spacing:1.04px;text-indent:0.52px">0</span><span class="r" style="width:6.77px;letter-spacing:0.27px;text-indent:0.14px">s</span></div>
<div class="t" style="left:7px;top:264px;width:380px;height:15px;line-height:15px;font-size:13px;color:#000;text-align:left;"><span class="r" style="width:26.08px;letter-spacing:0.02px;text-indent:0.01px">BSA</span><span class="r" style="width:6.50px;letter-spacing:-0.73px;text-indent:-0.36px">_</span><span class="r" style="width:16.54px;letter-spacing:1.04px;text-indent:0.52px">20</span><span class="r" style="width:6.50px;letter-spacing:-0.73px;text-indent:-0.36px">_</span><span class="r" style="width:33.94px;letter-spacing:-0.19px;text-indent:-0.09px">HPLC</span><span class="r" style="width:6.50px;letter-spacing:-0.73px;text-indent:-0.36px">_</span><span class="r" style="width:6.50px;letter-spacing:-0.73px;text-indent:-0.36px">_</span><span class="r" style="width:8.71px;letter-spacing:1.10px;text-indent:0.55px">lt</span><span class="r" style="width:6.50px;letter-spacing:-0.73px;text-indent:-0.36px">_</span><span class="r" style="width:8.25px;letter-spacing:1.02px;text-indent:0.51px">q</span><span class="r" style="width:8.27px;letter-spacing:1.04px;text-indent:0.52px">0</span><span class="r" style="width:6.50px;letter-spacing:-0.73px;text-indent:-0.36px">_</span><span class="r" style="width:49.63px;letter-spacing:1.04px;text-indent:0.52px">177374</span><span class="r" style="width:4.69px;letter-spacing:0.36px;text-indent:0.18px">-</span><span class="r" style="width:11.86px;letter-spacing:0.87px;text-indent:0.44px">bi</span><span class="r" style="width:4.69px;letter-spacing:0.36px;text-indent:0.18px">-</span><span class="r" style="width:8.27px;letter-spacing:1.04px;text-indent:0.52px">0</span><span class="r" style="width:6.50px;letter-spacing:-0.73px;text-indent:-0.36px">_</span><span class="r" style="width:49.63px;letter-spacing:1.04px;text-indent:0.52px">408367</span><span class="r" style="width:4.69px;letter-spacing:0.36px;text-indent:0.18px">-</span><span class="r" style="width:8.27px;letter-spacing:1.04px;text-indent:0.52px">0</span><span class="r" style="width:6.77px;letter-spacing:0.27px;text-indent:0.14px">s</span></div>
<div class="t" style="left:7px;top:279px;width:380px;height:15px;line-height:15px;font-size:13px;color:#000;text-align:left;"><span class="r" style="width:26.08px;letter-spacing:0.02px;text-indent:0.01px">BSA</span><span class="r" style="width:6.50px;letter-spacing:-0.73px;text-indent:-0.36px">_</span><span class="r" style="width:16.54px;letter-spacing:1.04px;text-indent:0.52px">20</span><span class="r" style="width:6.50px;letter-spacing:-0.73px;text-indent:-0.36px">_</span><span class="r" style="width:33.94px;letter-spacing:-0.19px;text-indent:-0.09px">HPLC</span><span class="r" style="width:6.50px;letter-spacing:-0.73px;text-indent:-0.36px">_</span><span class="r" style="width:6.50px;letter-spacing:-0.73px;text-indent:-0.36px">_</span><span class="r" style="width:8.71px;letter-spacing:1.10px;text-indent:0.55px">lt</span><span class="r" style="width:6.50px;letter-spacing:-0.73px;text-indent:-0.36px">_</span><span class="r" style="width:8.25px;letter-spacing:1.02px;text-indent:0.51px">q</span><span class="r" style="width:8.27px;letter-spacing:1.04px;text-indent:0.52px">0</span><span class="r" style="width:6.50px;letter-spacing:-0.73px;text-indent:-0.36px">_</span><span class="r" style="width:49.63px;letter-spacing:1.04px;text-indent:0.52px">183417</span><span class="r" style="width:4.69px;letter-spacing:0.36px;text-indent:0.18px">-</span><span class="r" style="width:11.86px;letter-spacing:0.87px;text-indent:0.44px">bi</span><span class="r" style="width:4.69px;letter-spacing:0.36px;text-indent:0.18px">-</span><span class="r" style="width:8.27px;letter-spacing:1.04px;text-indent:0.52px">0</span><span class="r" style="width:6.50px;letter-spacing:-0.73px;text-indent:-0.36px">_</span><span class="r" style="width:49.63px;letter-spacing:1.04px;text-indent:0.52px">559613</span><span class="r" style="width:4.69px;letter-spacing:0.36px;text-indent:0.18px">-</span><span class="r" style="width:8.27px;letter-spacing:1.04px;text-indent:0.52px">0</span><span class="r" style="width:6.77px;letter-spacing:0.27px;text-indent:0.14px">s</span></div>
<div class="t" style="left:7px;top:294px;width:380px;height:15px;line-height:15px;font-size:13px;color:#fff;text-align:left;"><span class="r" style="width:26.08px;letter-spacing:0.02px;text-indent:0.01px">BSA</span><span class="r" style="width:6.50px;letter-spacing:-0.73px;text-indent:-0.36px">_</span><span class="r" style="width:16.54px;letter-spacing:1.04px;text-indent:0.52px">20</span><span class="r" style="width:6.50px;letter-spacing:-0.73px;text-indent:-0.36px">_</span><span class="r" style="width:24.81px;letter-spacing:1.04px;text-indent:0.52px">280</span><span class="r" style="width:6.50px;letter-spacing:-0.73px;text-indent:-0.36px">_</span><span class="r" style="width:38.55px;letter-spacing:1.06px;text-indent:0.53px">frame</span></div>
<div class="sb" style="left:395px;top:143px;width:16px;height:176px"></div>
<div class="sbb" style="left:395px;top:143px;width:16px;height:16px"></div>
<div class="sbb" style="left:395px;top:303px;width:16px;height:16px"></div>
<div class="sbt" style="left:395px;top:274px;width:16px;height:30px"></div>
<svg style="left:395px;top:143px" width="16" height="16"><path d="M4.2 10 L11.8 10 L8 5.6 Z" fill="#444"/></svg>
<svg style="left:395px;top:303px" width="16" height="16"><path d="M4.2 6 L11.8 6 L8 10.4 Z" fill="#444"/></svg>
<div class="t" style="left:3px;top:319px;width:408px;height:14px;line-height:14px;font-size:13px;color:#000;text-align:center;"><span class="r" style="width:8.03px;letter-spacing:0.80px;text-indent:0.40px">1</span><span class="r" style="width:4.01px"> </span><span class="r" style="width:12.16px;letter-spacing:0.66px;text-indent:0.33px">of</span><span class="r" style="width:4.01px"> </span><span class="r" style="width:24.09px;letter-spacing:0.80px;text-indent:0.40px">647</span><span class="r" style="width:4.01px"> </span><span class="r" style="width:25.79px;letter-spacing:0.54px;text-indent:0.27px">files</span><span class="r" style="width:4.01px"> </span><span class="r" style="width:53.27px;letter-spacing:0.61px;text-indent:0.30px">selected</span></div>
<div class="b" style="left:3px;top:333px;width:136px;height:22px"><i></i></div>
<div class="t" style="left:3px;top:334px;width:136px;height:22px;line-height:22px;font-size:13px;color:#000;text-align:center;"><span class="r" style="width:7.94px;letter-spacing:-0.74px;text-indent:-0.37px">S</span><span class="r" style="width:11.16px;letter-spacing:0.52px;text-indent:0.26px">el</span><span class="r" style="width:3.97px;letter-spacing:0.36px;text-indent:0.18px">.</span><span class="r" style="width:3.97px"> </span><span class="r" style="width:14.61px;letter-spacing:0.53px;text-indent:0.27px">all</span></div>
<div class="b" style="left:139px;top:333px;width:136px;height:22px"><i></i></div>
<div class="t" style="left:139px;top:334px;width:136px;height:22px;line-height:22px;font-size:13px;color:#000;text-align:center;"><span class="r" style="width:7.94px;letter-spacing:-0.74px;text-indent:-0.37px">S</span><span class="r" style="width:11.16px;letter-spacing:0.52px;text-indent:0.26px">el</span><span class="r" style="width:3.97px;letter-spacing:0.36px;text-indent:0.18px">.</span><span class="r" style="width:3.97px"> </span><span class="r" style="width:9.15px;letter-spacing:-0.24px;text-indent:-0.12px">U</span><span class="r" style="width:25.60px;letter-spacing:0.44px;text-indent:0.22px">nsel</span><span class="r" style="width:3.97px;letter-spacing:0.36px;text-indent:0.18px">.</span></div>
<div class="b" style="left:275px;top:333px;width:136px;height:22px"><i></i></div>
<div class="t" style="left:275px;top:334px;width:136px;height:22px;line-height:22px;font-size:13px;color:#000;text-align:center;"><span class="r" style="width:8.55px;letter-spacing:-0.12px;text-indent:-0.06px">A</span><span class="r" style="width:15.33px;letter-spacing:0.80px;text-indent:0.40px">dv</span><span class="r" style="width:3.97px;letter-spacing:0.36px;text-indent:0.18px">.</span><span class="r" style="width:3.97px"> </span><span class="r" style="width:7.94px;letter-spacing:-0.74px;text-indent:-0.37px">S</span><span class="r" style="width:11.16px;letter-spacing:0.52px;text-indent:0.26px">el</span><span class="r" style="width:3.97px;letter-spacing:0.36px;text-indent:0.18px">.</span></div>
<div class="b" style="left:3px;top:355px;width:88px;height:22px"><i></i></div>
<div class="t" style="left:3px;top:356px;width:88px;height:22px;line-height:22px;font-size:13px;color:#f00;text-align:center;"><span class="r" style="width:8.97px;letter-spacing:-0.42px;text-indent:-0.21px">C</span><span class="r" style="width:23.07px;letter-spacing:0.70px;text-indent:0.35px">onc</span><span class="r" style="width:4.08px;letter-spacing:0.47px;text-indent:0.24px">.</span><span class="r" style="width:4.08px"> </span><span class="r" style="width:9.61px;letter-spacing:0.22px;text-indent:0.11px">N</span><span class="r" style="width:25.44px;letter-spacing:1.02px;text-indent:0.51px">orm</span><span class="r" style="width:4.08px;letter-spacing:0.47px;text-indent:0.24px">.</span></div>
<div class="b" style="left:91px;top:355px;width:80px;height:22px"><i></i></div>
<div class="t" style="left:91px;top:356px;width:80px;height:22px;line-height:22px;font-size:13px;color:#f00;text-align:center;"><span class="r" style="width:8.55px;letter-spacing:-0.12px;text-indent:-0.06px">A</span><span class="r" style="width:43.52px;letter-spacing:0.63px;text-indent:0.31px">verage</span></div>
<div class="b" style="left:171px;top:355px;width:80px;height:22px"><i></i></div>
<div class="t" style="left:171px;top:356px;width:80px;height:22px;line-height:22px;font-size:13px;color:#000;text-align:center;"><span class="r" style="width:8.58px;letter-spacing:-0.10px;text-indent:-0.05px">B</span><span class="r" style="width:11.39px;letter-spacing:0.64px;text-indent:0.32px">in</span></div>
<div class="b" style="left:251px;top:355px;width:80px;height:22px"><i></i></div>
<div class="t" style="left:251px;top:356px;width:80px;height:22px;line-height:22px;font-size:13px;color:#000;text-align:center;"><span class="r" style="width:7.94px;letter-spacing:-0.74px;text-indent:-0.37px">S</span><span class="r" style="width:40.29px;letter-spacing:0.83px;text-indent:0.42px">mooth</span></div>
<div class="b" style="left:331px;top:355px;width:80px;height:22px"><i></i></div>
<div class="t" style="left:331px;top:356px;width:80px;height:22px;line-height:22px;font-size:13px;color:#f00;text-align:center;"><span class="r" style="width:26.11px;letter-spacing:-0.21px;text-indent:-0.10px">SVD</span><span class="r" style="width:3.97px"> </span><span class="r" style="width:4.21px;letter-spacing:0.60px;text-indent:0.30px">/</span><span class="r" style="width:3.97px"> </span><span class="r" style="width:22.49px;letter-spacing:-0.69px;text-indent:-0.35px">EFA</span></div>
<div class="b" style="left:3px;top:377px;width:102px;height:22px"><i></i></div>
<div class="t" style="left:3px;top:378px;width:102px;height:22px;line-height:22px;font-size:13px;color:#f00;text-align:center;"><span class="r" style="width:10.79px;letter-spacing:-0.04px;text-indent:-0.02px">M</span><span class="r" style="width:22.14px;letter-spacing:0.40px;text-indent:0.20px">ake</span><span class="r" style="width:3.97px"> </span><span class="r" style="width:3.69px;letter-spacing:0.08px;text-indent:0.04px">I</span><span class="r" style="width:10.47px;letter-spacing:3.25px;text-indent:1.62px">#</span><span class="r" style="width:3.97px;letter-spacing:0.36px;text-indent:0.18px">,</span><span class="r" style="width:3.69px;letter-spacing:0.08px;text-indent:0.04px">I</span><span class="r" style="width:6.25px;letter-spacing:1.19px;text-indent:0.60px">*</span><span class="r" style="width:4.88px;letter-spacing:0.55px;text-indent:0.27px">(</span><span class="r" style="width:7.94px;letter-spacing:0.71px;text-indent:0.35px">q</span><span class="r" style="width:4.88px;letter-spacing:0.55px;text-indent:0.27px">)</span></div>
<div class="b" style="left:105px;top:377px;width:102px;height:22px"><i></i></div>
<div class="t" style="left:105px;top:378px;width:102px;height:22px;line-height:22px;font-size:13px;color:#f00;text-align:center;"><span class="r" style="width:10.79px;letter-spacing:-0.04px;text-indent:-0.02px">M</span><span class="r" style="width:22.14px;letter-spacing:0.40px;text-indent:0.20px">ake</span><span class="r" style="width:3.97px"> </span><span class="r" style="width:3.69px;letter-spacing:0.08px;text-indent:0.04px">I</span><span class="r" style="width:4.88px;letter-spacing:0.55px;text-indent:0.27px">(</span><span class="r" style="width:4.90px;letter-spacing:1.29px;text-indent:0.64px">t</span><span class="r" style="width:4.88px;letter-spacing:0.55px;text-indent:0.27px">)</span></div>
<div class="b" style="left:207px;top:377px;width:102px;height:22px"><i></i></div>
<div class="t" style="left:207px;top:378px;width:102px;height:22px;line-height:22px;font-size:13px;color:#000;text-align:center;"><span class="r" style="width:7.63px;letter-spacing:-0.31px;text-indent:-0.15px">T</span><span class="r" style="width:19.10px;letter-spacing:0.59px;text-indent:0.29px">est</span><span class="r" style="width:3.97px"> </span><span class="r" style="width:3.69px;letter-spacing:0.08px;text-indent:0.04px">I</span><span class="r" style="width:4.88px;letter-spacing:0.55px;text-indent:0.27px">(</span><span class="r" style="width:4.90px;letter-spacing:1.29px;text-indent:0.64px">t</span><span class="r" style="width:4.88px;letter-spacing:0.55px;text-indent:0.27px">)</span></div>
<div class="b" style="left:309px;top:377px;width:102px;height:22px"><i></i></div>
<div class="t" style="left:309px;top:378px;width:102px;height:22px;line-height:22px;font-size:13px;color:#f00;text-align:center;"><span class="r" style="width:10.79px;letter-spacing:-0.04px;text-indent:-0.02px">M</span><span class="r" style="width:22.14px;letter-spacing:0.40px;text-indent:0.20px">ake</span><span class="r" style="width:3.97px"> </span><span class="r" style="width:3.69px;letter-spacing:0.08px;text-indent:0.04px">I</span><span class="r" style="width:4.88px;letter-spacing:0.55px;text-indent:0.27px">(</span><span class="r" style="width:7.94px;letter-spacing:0.71px;text-indent:0.35px">q</span><span class="r" style="width:4.88px;letter-spacing:0.55px;text-indent:0.27px">)</span></div>
<div style="left:3px;top:399px;width:408px;height:22px;background:#000;"></div>
<div class="t" style="left:3px;top:400px;width:408px;height:22px;line-height:22px;font-size:13.5px;color:#fff;text-align:center;font-weight:bold;-webkit-text-stroke:0.35px #fff;"><span class="r" style="width:9.68px;letter-spacing:0.67px;text-indent:0.34px">P</span><span class="r" style="width:60.65px;letter-spacing:1.06px;text-indent:0.53px">roduced</span><span class="r" style="width:4.60px"> </span><span class="r" style="width:10.96px;letter-spacing:1.21px;text-indent:0.60px">D</span><span class="r" style="width:24.13px;letter-spacing:1.54px;text-indent:0.77px">ata</span></div>
<div style="left:3px;top:421px;width:408px;height:21px;background:#fff;"></div>
<div class="t" style="left:3px;top:421px;width:408px;height:21px;line-height:21px;font-size:13px;color:#000;text-align:center;"><span class="r" style="width:4.13px;letter-spacing:0.52px;text-indent:0.26px">/</span><span class="r" style="width:34.73px;letter-spacing:0.55px;text-indent:0.28px">home</span><span class="r" style="width:4.13px;letter-spacing:0.52px;text-indent:0.26px">/</span><span class="r" style="width:56.90px;letter-spacing:0.46px;text-indent:0.23px">ultrascan</span><span class="r" style="width:4.13px;letter-spacing:0.52px;text-indent:0.26px">/</span><span class="r" style="width:31.98px;letter-spacing:-0.67px;text-indent:-0.34px">HPLC</span><span class="r" style="width:6.12px;letter-spacing:-1.10px;text-indent:-0.55px">_</span><span class="r" style="width:32.55px;letter-spacing:-0.53px;text-indent:-0.27px">SAXS</span><span class="r" style="width:4.13px;letter-spacing:0.52px;text-indent:0.26px">/</span><span class="r" style="width:24.57px;letter-spacing:-0.48px;text-indent:-0.24px">BSA</span><span class="r" style="width:4.13px;letter-spacing:0.52px;text-indent:0.26px">/</span><span class="r" style="width:57.63px;letter-spacing:0.43px;text-indent:0.21px">produced</span></div>
<div style="left:3px;top:442px;width:408px;height:72px;background:#fff;border:1px solid #a0a0a0"></div>
<div class="t" style="left:3px;top:514px;width:408px;height:14px;line-height:14px;font-size:13px;color:#000;text-align:center;"><span class="r" style="width:8.03px;letter-spacing:0.80px;text-indent:0.40px">0</span><span class="r" style="width:4.01px"> </span><span class="r" style="width:12.16px;letter-spacing:0.66px;text-indent:0.33px">of</span><span class="r" style="width:4.01px"> </span><span class="r" style="width:8.03px;letter-spacing:0.80px;text-indent:0.40px">0</span><span class="r" style="width:4.01px"> </span><span class="r" style="width:25.79px;letter-spacing:0.54px;text-indent:0.27px">files</span><span class="r" style="width:4.01px"> </span><span class="r" style="width:53.27px;letter-spacing:0.61px;text-indent:0.30px">selected</span></div>
<div class="b" style="left:3px;top:528px;width:136px;height:22px"><i></i></div>
<div class="t" style="left:3px;top:529px;width:136px;height:22px;line-height:22px;font-size:13px;color:#f00;text-align:center;"><span class="r" style="width:7.94px;letter-spacing:-0.74px;text-indent:-0.37px">S</span><span class="r" style="width:30.63px;letter-spacing:0.63px;text-indent:0.32px">elect</span><span class="r" style="width:3.97px"> </span><span class="r" style="width:14.61px;letter-spacing:0.53px;text-indent:0.27px">all</span></div>
<div class="b" style="left:139px;top:528px;width:136px;height:22px"><i></i></div>
<div class="t" style="left:139px;top:529px;width:136px;height:22px;line-height:22px;font-size:13px;color:#f00;text-align:center;"><span class="r" style="width:7.94px;letter-spacing:-0.74px;text-indent:-0.37px">S</span><span class="r" style="width:11.16px;letter-spacing:0.52px;text-indent:0.26px">el</span><span class="r" style="width:3.97px;letter-spacing:0.36px;text-indent:0.18px">.</span><span class="r" style="width:3.97px"> </span><span class="r" style="width:9.15px;letter-spacing:-0.24px;text-indent:-0.12px">U</span><span class="r" style="width:25.60px;letter-spacing:0.44px;text-indent:0.22px">nsel</span><span class="r" style="width:3.97px;letter-spacing:0.36px;text-indent:0.18px">.</span></div>
<div class="b" style="left:275px;top:528px;width:136px;height:22px"><i></i></div>
<div class="t" style="left:275px;top:529px;width:136px;height:22px;line-height:22px;font-size:13px;color:#f00;text-align:center;"><span class="r" style="width:8.69px;letter-spacing:-0.70px;text-indent:-0.35px">R</span><span class="r" style="width:42.61px;letter-spacing:0.72px;text-indent:0.36px">emove</span></div>
<div class="b" style="left:3px;top:550px;width:102px;height:22px"><i></i></div>
<div class="t" style="left:3px;top:551px;width:102px;height:22px;line-height:22px;font-size:13px;color:#f00;text-align:center;"><span class="r" style="width:7.94px;letter-spacing:-0.74px;text-indent:-0.37px">S</span><span class="r" style="width:25.79px;letter-spacing:0.65px;text-indent:0.32px">how</span></div>
<div class="b" style="left:105px;top:550px;width:102px;height:22px"><i></i></div>
<div class="t" style="left:105px;top:551px;width:102px;height:22px;line-height:22px;font-size:13px;color:#f00;text-align:center;"><span class="r" style="width:7.94px;letter-spacing:-0.74px;text-indent:-0.37px">S</span><span class="r" style="width:25.79px;letter-spacing:0.65px;text-indent:0.32px">how</span><span class="r" style="width:3.97px"> </span><span class="r" style="width:26.44px;letter-spacing:0.65px;text-indent:0.32px">only</span></div>
<div class="b" style="left:207px;top:550px;width:102px;height:22px"><i></i></div>
<div class="t" style="left:207px;top:551px;width:102px;height:22px;line-height:22px;font-size:13px;color:#f00;text-align:center;"><span class="r" style="width:7.94px;letter-spacing:-0.74px;text-indent:-0.37px">S</span><span class="r" style="width:22.75px;letter-spacing:0.60px;text-indent:0.30px">ave</span><span class="r" style="width:3.97px"> </span><span class="r" style="width:25.21px;letter-spacing:-0.51px;text-indent:-0.25px">CSV</span></div>
<div class="b" style="left:309px;top:550px;width:102px;height:22px"><i></i></div>
<div class="t" style="left:309px;top:551px;width:102px;height:22px;line-height:22px;font-size:13px;color:#f00;text-align:center;"><span class="r" style="width:7.94px;letter-spacing:-0.74px;text-indent:-0.37px">S</span><span class="r" style="width:22.75px;letter-spacing:0.60px;text-indent:0.30px">ave</span></div>
<div style="left:3px;top:572px;width:408px;height:22px;background:#000;"></div>
<div class="t" style="left:3px;top:573px;width:408px;height:22px;line-height:22px;font-size:13.5px;color:#fff;text-align:center;font-weight:bold;-webkit-text-stroke:0.35px #fff;"><span class="r" style="width:13.34px;letter-spacing:2.09px;text-indent:1.05px">M</span><span class="r" style="width:60.74px;letter-spacing:1.06px;text-indent:0.53px">essages</span></div>
<div class="t" style="left:12px;top:594px;width:40px;height:20px;line-height:20px;font-size:13px;color:#000;text-align:left;"><span class="r" style="width:7.19px;letter-spacing:-0.75px;text-indent:-0.38px">F</span><span class="r" style="width:14.64px;letter-spacing:0.54px;text-indent:0.27px">ile</span></div>
<div style="left:12px;top:611px;width:7px;height:1px;background:#000;"></div>
<div style="left:3px;top:613px;width:34px;height:1px;background:#b0b0b0;"></div>
<div style="left:3px;top:618px;width:408px;height:72px;background:#fff;border:1px solid #a0a0a0;overflow:hidden">
<div class="t" style="left:11.7px;top:-6px;height:14px;line-height:14px;font-size:13px;color:#00008b"><span class="r" style="width:16.03px;letter-spacing:0.79px;text-indent:0.39px">23</span><span class="r" style="width:4.00px;letter-spacing:0.39px;text-indent:0.20px">.</span><span class="r" style="width:8.02px;letter-spacing:0.79px;text-indent:0.39px">4</span><span class="r" style="width:11.97px;letter-spacing:0.41px;text-indent:0.21px">%</span><span class="r" style="width:4.00px"> </span><span class="r" style="width:8.02px;letter-spacing:0.79px;text-indent:0.39px">0</span><span class="r" style="width:4.00px;letter-spacing:0.39px;text-indent:0.20px">.</span><span class="r" style="width:16.03px;letter-spacing:0.79px;text-indent:0.39px">01</span><span class="r" style="width:4.00px"> </span><span class="r" style="width:10.56px;letter-spacing:2.97px;text-indent:1.48px">&lt;</span><span class="r" style="width:4.00px"> </span><span class="r" style="width:7.60px;letter-spacing:-1.07px;text-indent:-0.54px">P</span><span class="r" style="width:4.00px"> </span><span class="r" style="width:30.96px;letter-spacing:0.56px;text-indent:0.28px">pairs</span></div>
<div class="t" style="left:3.8px;top:22px;height:14px;line-height:14px;font-size:13px;color:#000"><span class="r" style="width:41.33px;letter-spacing:0.38px;text-indent:0.19px">loaded</span><span class="r" style="width:3.88px"> </span><span class="r" style="width:28.39px;letter-spacing:0.60px;text-indent:0.30px">from</span><span class="r" style="width:3.88px"> </span><span class="r" style="width:4.11px;letter-spacing:0.50px;text-indent:0.25px">/</span><span class="r" style="width:34.59px;letter-spacing:0.52px;text-indent:0.26px">home</span><span class="r" style="width:4.11px;letter-spacing:0.50px;text-indent:0.25px">/</span><span class="r" style="width:56.67px;letter-spacing:0.44px;text-indent:0.22px">ultrascan</span><span class="r" style="width:4.11px;letter-spacing:0.50px;text-indent:0.25px">/</span><span class="r" style="width:31.85px;letter-spacing:-0.71px;text-indent:-0.35px">HPLC</span><span class="r" style="width:6.10px;letter-spacing:-1.13px;text-indent:-0.56px">_</span><span class="r" style="width:32.42px;letter-spacing:-0.57px;text-indent:-0.28px">SAXS</span><span class="r" style="width:4.11px;letter-spacing:0.50px;text-indent:0.25px">/</span><span class="r" style="width:24.47px;letter-spacing:-0.51px;text-indent:-0.26px">BSA</span><span class="r" style="width:4.11px;letter-spacing:0.50px;text-indent:0.25px">:</span></div>
<div class="t" style="left:3.8px;top:36px;height:14px;line-height:14px;font-size:13px;color:#00008b"><span class="r" style="width:41.21px;letter-spacing:-0.72px;text-indent:-0.36px">SOLEIL</span><span class="r" style="width:3.78px"> </span><span class="r" style="width:31.06px;letter-spacing:-0.90px;text-indent:-0.45px">HPLC</span><span class="r" style="width:3.78px"> </span><span class="r" style="width:26.88px;letter-spacing:0.58px;text-indent:0.29px">time</span><span class="r" style="width:4.01px;letter-spacing:0.40px;text-indent:0.20px">/</span><span class="r" style="width:14.58px;letter-spacing:0.43px;text-indent:0.21px">uv</span><span class="r" style="width:3.78px"> </span><span class="r" style="width:39.70px;letter-spacing:0.48px;text-indent:0.24px">format</span></div>
<div class="t" style="left:3.8px;top:50px;height:14px;line-height:14px;font-size:13px;color:#000"><span class="r" style="width:24.47px;letter-spacing:-0.51px;text-indent:-0.26px">BSA</span><span class="r" style="width:6.10px;letter-spacing:-1.13px;text-indent:-0.56px">_</span><span class="r" style="width:15.52px;letter-spacing:0.53px;text-indent:0.27px">20</span><span class="r" style="width:6.10px;letter-spacing:-1.13px;text-indent:-0.56px">_</span><span class="r" style="width:23.29px;letter-spacing:0.53px;text-indent:0.27px">280</span><span class="r" style="width:6.10px;letter-spacing:-1.13px;text-indent:-0.56px">_</span><span class="r" style="width:36.18px;letter-spacing:0.59px;text-indent:0.29px">frame</span></div>
<div class="t" style="left:3.8px;top:64px;height:14px;line-height:14px;font-size:13px;color:#0000ff"><span class="r" style="width:7.02px;letter-spacing:-0.92px;text-indent:-0.46px">F</span><span class="r" style="width:20.64px;letter-spacing:0.28px;text-indent:0.14px">iles</span><span class="r" style="width:3.88px"> </span><span class="r" style="width:41.33px;letter-spacing:0.38px;text-indent:0.19px">loaded</span><span class="r" style="width:3.88px"> </span><span class="r" style="width:14.53px;letter-spacing:0.40px;text-indent:0.20px">ok</span></div>
</div>
<div class="sb" style="left:395px;top:618px;width:16px;height:72px"></div>
<div class="sbb" style="left:395px;top:618px;width:16px;height:16px"></div>
<div class="sbb" style="left:395px;top:674px;width:16px;height:16px"></div>
<div class="sbt" style="left:395px;top:643px;width:16px;height:29px"></div>
<svg style="left:395px;top:618px" width="16" height="16"><path d="M4.2 10 L11.8 10 L8 5.6 Z" fill="#444"/></svg>
<svg style="left:395px;top:674px" width="16" height="16"><path d="M4.2 6 L11.8 6 L8 10.4 Z" fill="#444"/></svg>
<div style="left:3px;top:690px;width:1199px;height:25px;background:#008080;"></div>
<div class="b" style="left:3px;top:691px;width:166px;height:23px"><i></i></div>
<div class="t" style="left:3px;top:691px;width:166px;height:23px;line-height:23px;font-size:13px;color:#000;text-align:center;"><span class="r" style="width:9.40px;letter-spacing:0.01px;text-indent:0.01px">H</span><span class="r" style="width:19.10px;letter-spacing:0.58px;text-indent:0.29px">elp</span></div>
<div class="b" style="left:169px;top:691px;width:166px;height:23px"><i></i></div>
<div class="t" style="left:169px;top:691px;width:166px;height:23px;line-height:23px;font-size:13px;color:#000;text-align:center;"><span class="r" style="width:9.84px;letter-spacing:-0.27px;text-indent:-0.14px">O</span><span class="r" style="width:38.39px;letter-spacing:0.62px;text-indent:0.31px">ptions</span></div>
<div style="left:336px;top:691px;width:533px;height:22px;background:#fff;"></div>
<div class="b" style="left:869px;top:691px;width:333px;height:23px"><i></i></div>
<div class="t" style="left:869px;top:691px;width:333px;height:23px;line-height:23px;font-size:13px;color:#000;text-align:center;"><span class="r" style="width:8.73px;letter-spacing:-0.66px;text-indent:-0.33px">C</span><span class="r" style="width:25.32px;letter-spacing:0.37px;text-indent:0.18px">lose</span></div>
<div class="t" style="left:427px;top:53px;width:100px;height:23px;line-height:23px;font-size:13.5px;color:#000;text-align:left;"><span class="r" style="width:7.54px;letter-spacing:-1.47px;text-indent:-0.73px">P</span><span class="r" style="width:16.02px;letter-spacing:0.59px;text-indent:0.29px">lot</span><span class="r" style="width:3.97px"> </span><span class="r" style="width:47.74px;letter-spacing:0.49px;text-indent:0.25px">buttons</span><span class="r" style="width:4.21px;letter-spacing:0.46px;text-indent:0.23px">:</span></div>
<div style="left:525px;top:57px;width:14px;height:14px;border-radius:50%;background:#fff;border:1px solid #9c9c9c"></div>
<div class="t" style="left:545.5px;top:53px;width:100px;height:23px;line-height:23px;font-size:13.5px;color:#000;text-align:left;"><span class="r" style="width:9.84px;letter-spacing:-0.66px;text-indent:-0.33px">O</span><span class="r" style="width:38.39px;letter-spacing:0.39px;text-indent:0.20px">ptions</span></div>
<div style="left:638px;top:57px;width:14px;height:14px;border-radius:50%;background:#fff;border:1px solid #9c9c9c"></div>
<div class="t" style="left:658.5px;top:53px;width:100px;height:23px;line-height:23px;font-size:13.5px;color:#000;text-align:left;"><span class="r" style="width:7.94px;letter-spacing:-1.07px;text-indent:-0.53px">S</span><span class="r" style="width:56.18px;letter-spacing:0.32px;text-indent:0.16px">elections</span></div>
<div style="left:751px;top:57px;width:14px;height:14px;border-radius:50%;background:#fff;border:1px solid #9c9c9c"></div>
<div class="t" style="left:771.5px;top:53px;width:100px;height:23px;line-height:23px;font-size:13.5px;color:#000;text-align:left;"><span class="r" style="width:8.73px;letter-spacing:-1.02px;text-indent:-0.51px">C</span><span class="r" style="width:47.71px;letter-spacing:0.38px;text-indent:0.19px">ropping</span></div>
<div style="left:864px;top:57px;width:14px;height:14px;border-radius:50%;background:#fff;border:1px solid #9c9c9c"></div>
<div style="left:868px;top:61px;width:6px;height:6px;border-radius:50%;background:#3c3c3c"></div>
<div class="t" style="left:884.5px;top:53px;width:100px;height:23px;line-height:23px;font-size:13.5px;color:#000;text-align:left;"><span class="r" style="width:8.73px;letter-spacing:-1.02px;text-indent:-0.51px">C</span><span class="r" style="width:22.44px;letter-spacing:0.23px;text-indent:0.11px">onc</span><span class="r" style="width:3.97px;letter-spacing:0.22px;text-indent:0.11px">.</span><span class="r" style="width:3.97px"> </span><span class="r" style="width:9.15px;letter-spacing:-0.60px;text-indent:-0.30px">U</span><span class="r" style="width:11.85px;letter-spacing:0.70px;text-indent:0.35px">til</span><span class="r" style="width:3.97px;letter-spacing:0.22px;text-indent:0.11px">.</span></div>
<div style="left:977px;top:57px;width:14px;height:14px;border-radius:50%;background:#fff;border:1px solid #9c9c9c"></div>
<div class="t" style="left:997.5px;top:53px;width:100px;height:23px;line-height:23px;font-size:13.5px;color:#000;text-align:left;"><span class="r" style="width:7.94px;letter-spacing:-1.07px;text-indent:-0.53px">S</span><span class="r" style="width:3.97px;letter-spacing:0.22px;text-indent:0.11px">.</span><span class="r" style="width:9.62px;letter-spacing:-0.12px;text-indent:-0.06px">D</span><span class="r" style="width:3.97px;letter-spacing:0.22px;text-indent:0.11px">.</span><span class="r" style="width:3.97px"> </span><span class="r" style="width:9.15px;letter-spacing:-0.60px;text-indent:-0.30px">U</span><span class="r" style="width:11.85px;letter-spacing:0.70px;text-indent:0.35px">til</span><span class="r" style="width:3.97px;letter-spacing:0.22px;text-indent:0.11px">.</span><span class="r" style="width:3.97px;letter-spacing:0.22px;text-indent:0.11px">.</span></div>
<div style="left:1090px;top:57px;width:14px;height:14px;border-radius:50%;background:#fff;border:1px solid #9c9c9c"></div>
<div class="t" style="left:1110.5px;top:53px;width:100px;height:23px;line-height:23px;font-size:13.5px;color:#000;text-align:left;"><span class="r" style="width:9.35px;letter-spacing:-0.40px;text-indent:-0.20px">N</span><span class="r" style="width:23.26px;letter-spacing:0.25px;text-indent:0.12px">one</span></div>
<div style="left:411px;top:52px;width:791px;height:1px;background:#cbc4c4;"></div>
<div style="left:411px;top:75px;width:316px;height:1px;background:#cfc6c6;"></div>
<div style="left:886px;top:75px;width:316px;height:1px;background:#cfc6c6;"></div>
<div style="left:411px;top:620px;width:791px;height:1px;background:#cfc6c6;"></div>
<div class="b" style="left:411px;top:76px;width:158px;height:23px"><i></i></div>
<div class="t" style="left:411px;top:76px;width:158px;height:23px;line-height:23px;font-size:13px;color:#f00;text-align:center;"><span class="r" style="width:8.69px;letter-spacing:-0.70px;text-indent:-0.35px">R</span><span class="r" style="width:38.22px;letter-spacing:0.56px;text-indent:0.28px">epeak</span></div>
<div class="b" style="left:569px;top:76px;width:158px;height:23px"><i></i></div>
<div class="t" style="left:569px;top:76px;width:158px;height:23px;line-height:23px;font-size:13px;color:#000;text-align:center;"><span class="r" style="width:7.94px;letter-spacing:-0.74px;text-indent:-0.37px">S</span><span class="r" style="width:12.59px;letter-spacing:0.88px;text-indent:0.44px">et</span></div>
<div class="b" style="left:886px;top:76px;width:158px;height:23px"><i></i></div>
<div class="t" style="left:886px;top:76px;width:158px;height:23px;line-height:23px;font-size:13px;color:#f00;text-align:center;"><span class="r" style="width:7.63px;letter-spacing:-0.31px;text-indent:-0.15px">T</span><span class="r" style="width:50.33px;letter-spacing:0.69px;text-indent:0.35px">imeshift</span></div>
<div class="b" style="left:1044px;top:76px;width:158px;height:23px"><i></i></div>
<div class="t" style="left:1044px;top:76px;width:158px;height:23px;line-height:23px;font-size:13px;color:#000;text-align:center;"><span class="r" style="width:7.63px;letter-spacing:-0.31px;text-indent:-0.15px">T</span><span class="r" style="width:55.55px;letter-spacing:0.53px;text-indent:0.27px">imescale</span></div>
<div style="left:483px;top:109px;width:709px;height:430px;background:#fff;"></div>
<div style="left:483px;top:109px;width:709px;height:2px;background:#a4a4a4;"></div>
<div style="left:483px;top:109px;width:2px;height:428px;background:#a4a4a4;"></div>
<div style="left:1190px;top:109px;width:2px;height:430px;background:#fff;"></div>
<div style="left:485px;top:111px;width:705px;height:426px;background:#000;"></div>
<svg style="left:0;top:0" width="1205" height="718" viewBox="0 0 1205 718" shape-rendering="crispEdges">
<path d="M489.5 111V537" stroke="#fff" stroke-width="1" stroke-dasharray="1 2"/>
<path d="M517.5 111V537" stroke="#a8a8a8" stroke-width="1" stroke-dasharray="1 2"/>
<path d="M544.5 111V537" stroke="#a8a8a8" stroke-width="1" stroke-dasharray="1 2"/>
<path d="M572.5 111V537" stroke="#a8a8a8" stroke-width="1" stroke-dasharray="1 2"/>
<path d="M600.5 111V537" stroke="#a8a8a8" stroke-width="1" stroke-dasharray="1 2"/>
<path d="M627.5 111V537" stroke="#fff" stroke-width="1" stroke-dasharray="1 2"/>
<path d="M655.5 111V537" stroke="#a8a8a8" stroke-width="1" stroke-dasharray="1 2"/>
<path d="M682.5 111V537" stroke="#a8a8a8" stroke-width="1" stroke-dasharray="1 2"/>
<path d="M710.5 111V537" stroke="#a8a8a8" stroke-width="1" stroke-dasharray="1 2"/>
<path d="M738.5 111V537" stroke="#a8a8a8" stroke-width="1" stroke-dasharray="1 2"/>
<path d="M765.5 111V537" stroke="#fff" stroke-width="1" stroke-dasharray="1 2"/>
<path d="M793.5 111V537" stroke="#a8a8a8" stroke-width="1" stroke-dasharray="1 2"/>
<path d="M820.5 111V537" stroke="#a8a8a8" stroke-width="1" stroke-dasharray="1 2"/>
<path d="M848.5 111V537" stroke="#a8a8a8" stroke-width="1" stroke-dasharray="1 2"/>
<path d="M876.5 111V537" stroke="#a8a8a8" stroke-width="1" stroke-dasharray="1 2"/>
<path d="M903.5 111V537" stroke="#fff" stroke-width="1" stroke-dasharray="1 2"/>
<path d="M931.5 111V537" stroke="#a8a8a8" stroke-width="1" stroke-dasharray="1 2"/>
<path d="M958.5 111V537" stroke="#a8a8a8" stroke-width="1" stroke-dasharray="1 2"/>
<path d="M986.5 111V537" stroke="#a8a8a8" stroke-width="1" stroke-dasharray="1 2"/>
<path d="M1014.5 111V537" stroke="#a8a8a8" stroke-width="1" stroke-dasharray="1 2"/>
<path d="M1041.5 111V537" stroke="#fff" stroke-width="1" stroke-dasharray="1 2"/>
<path d="M1069.5 111V537" stroke="#a8a8a8" stroke-width="1" stroke-dasharray="1 2"/>
<path d="M1096.5 111V537" stroke="#a8a8a8" stroke-width="1" stroke-dasharray="1 2"/>
<path d="M1124.5 111V537" stroke="#a8a8a8" stroke-width="1" stroke-dasharray="1 2"/>
<path d="M1152.5 111V537" stroke="#a8a8a8" stroke-width="1" stroke-dasharray="1 2"/>
<path d="M1179.5 111V537" stroke="#fff" stroke-width="1" stroke-dasharray="1 2"/>
<path d="M485 521.5H1190" stroke="#a8a8a8" stroke-width="1" stroke-dasharray="1 2"/>
<path d="M485 509.5H1190" stroke="#a8a8a8" stroke-width="1" stroke-dasharray="1 2"/>
<path d="M485 498.5H1190" stroke="#a8a8a8" stroke-width="1" stroke-dasharray="1 2"/>
<path d="M485 486.5H1190" stroke="#a8a8a8" stroke-width="1" stroke-dasharray="1 2"/>
<path d="M485 474.5H1190" stroke="#fff" stroke-width="1" stroke-dasharray="1 2"/>
<path d="M485 463.5H1190" stroke="#a8a8a8" stroke-width="1" stroke-dasharray="1 2"/>
<path d="M485 451.5H1190" stroke="#a8a8a8" stroke-width="1" stroke-dasharray="1 2"/>
<path d="M485 440.5H1190" stroke="#a8a8a8" stroke-width="1" stroke-dasharray="1 2"/>
<path d="M485 428.5H1190" stroke="#a8a8a8" stroke-width="1" stroke-dasharray="1 2"/>
<path d="M485 416.5H1190" stroke="#fff" stroke-width="1" stroke-dasharray="1 2"/>
<path d="M485 405.5H1190" stroke="#a8a8a8" stroke-width="1" stroke-dasharray="1 2"/>
<path d="M485 393.5H1190" stroke="#a8a8a8" stroke-width="1" stroke-dasharray="1 2"/>
<path d="M485 382.5H1190" stroke="#a8a8a8" stroke-width="1" stroke-dasharray="1 2"/>
<path d="M485 370.5H1190" stroke="#a8a8a8" stroke-width="1" stroke-dasharray="1 2"/>
<path d="M485 359.5H1190" stroke="#fff" stroke-width="1" stroke-dasharray="1 2"/>
<path d="M485 347.5H1190" stroke="#a8a8a8" stroke-width="1" stroke-dasharray="1 2"/>
<path d="M485 335.5H1190" stroke="#a8a8a8" stroke-width="1" stroke-dasharray="1 2"/>
<path d="M485 324.5H1190" stroke="#a8a8a8" stroke-width="1" stroke-dasharray="1 2"/>
<path d="M485 312.5H1190" stroke="#a8a8a8" stroke-width="1" stroke-dasharray="1 2"/>
<path d="M485 301.5H1190" stroke="#fff" stroke-width="1" stroke-dasharray="1 2"/>
<path d="M485 289.5H1190" stroke="#a8a8a8" stroke-width="1" stroke-dasharray="1 2"/>
<path d="M485 277.5H1190" stroke="#a8a8a8" stroke-width="1" stroke-dasharray="1 2"/>
<path d="M485 266.5H1190" stroke="#a8a8a8" stroke-width="1" stroke-dasharray="1 2"/>
<path d="M485 254.5H1190" stroke="#a8a8a8" stroke-width="1" stroke-dasharray="1 2"/>
<path d="M485 243.5H1190" stroke="#fff" stroke-width="1" stroke-dasharray="1 2"/>
<path d="M485 231.5H1190" stroke="#a8a8a8" stroke-width="1" stroke-dasharray="1 2"/>
<path d="M485 219.5H1190" stroke="#a8a8a8" stroke-width="1" stroke-dasharray="1 2"/>
<path d="M485 208.5H1190" stroke="#a8a8a8" stroke-width="1" stroke-dasharray="1 2"/>
<path d="M485 196.5H1190" stroke="#a8a8a8" stroke-width="1" stroke-dasharray="1 2"/>
<path d="M485 185.5H1190" stroke="#fff" stroke-width="1" stroke-dasharray="1 2"/>
<path d="M485 173.5H1190" stroke="#a8a8a8" stroke-width="1" stroke-dasharray="1 2"/>
<path d="M485 161.5H1190" stroke="#a8a8a8" stroke-width="1" stroke-dasharray="1 2"/>
<path d="M485 150.5H1190" stroke="#a8a8a8" stroke-width="1" stroke-dasharray="1 2"/>
<path d="M485 138.5H1190" stroke="#a8a8a8" stroke-width="1" stroke-dasharray="1 2"/>
<path d="M485 127.5H1190" stroke="#fff" stroke-width="1" stroke-dasharray="1 2"/>
<path d="M485 115.5H1190" stroke="#a8a8a8" stroke-width="1" stroke-dasharray="1 2"/>
<path d="M480.5 115V532" stroke="#000" stroke-width="1"/>
<path d="M476 521.5H481" stroke="#000" stroke-width="1"/>
<path d="M476 509.5H481" stroke="#000" stroke-width="1"/>
<path d="M476 498.5H481" stroke="#000" stroke-width="1"/>
<path d="M476 486.5H481" stroke="#000" stroke-width="1"/>
<path d="M472 474.5H481" stroke="#000" stroke-width="1"/>
<path d="M476 463.5H481" stroke="#000" stroke-width="1"/>
<path d="M476 451.5H481" stroke="#000" stroke-width="1"/>
<path d="M476 440.5H481" stroke="#000" stroke-width="1"/>
<path d="M476 428.5H481" stroke="#000" stroke-width="1"/>
<path d="M472 416.5H481" stroke="#000" stroke-width="1"/>
<path d="M476 405.5H481" stroke="#000" stroke-width="1"/>
<path d="M476 393.5H481" stroke="#000" stroke-width="1"/>
<path d="M476 382.5H481" stroke="#000" stroke-width="1"/>
<path d="M476 370.5H481" stroke="#000" stroke-width="1"/>
<path d="M472 359.5H481" stroke="#000" stroke-width="1"/>
<path d="M476 347.5H481" stroke="#000" stroke-width="1"/>
<path d="M476 335.5H481" stroke="#000" stroke-width="1"/>
<path d="M476 324.5H481" stroke="#000" stroke-width="1"/>
<path d="M476 312.5H481" stroke="#000" stroke-width="1"/>
<path d="M472 301.5H481" stroke="#000" stroke-width="1"/>
<path d="M476 289.5H481" stroke="#000" stroke-width="1"/>
<path d="M476 277.5H481" stroke="#000" stroke-width="1"/>
<path d="M476 266.5H481" stroke="#000" stroke-width="1"/>
<path d="M476 254.5H481" stroke="#000" stroke-width="1"/>
<path d="M472 243.5H481" stroke="#000" stroke-width="1"/>
<path d="M476 231.5H481" stroke="#000" stroke-width="1"/>
<path d="M476 219.5H481" stroke="#000" stroke-width="1"/>
<path d="M476 208.5H481" stroke="#000" stroke-width="1"/>
<path d="M476 196.5H481" stroke="#000" stroke-width="1"/>
<path d="M472 185.5H481" stroke="#000" stroke-width="1"/>
<path d="M476 173.5H481" stroke="#000" stroke-width="1"/>
<path d="M476 161.5H481" stroke="#000" stroke-width="1"/>
<path d="M476 150.5H481" stroke="#000" stroke-width="1"/>
<path d="M476 138.5H481" stroke="#000" stroke-width="1"/>
<path d="M472 127.5H481" stroke="#000" stroke-width="1"/>
<path d="M476 115.5H481" stroke="#000" stroke-width="1"/>
<path d="M489 541.5H1185" stroke="#000" stroke-width="1"/>
<path d="M489.5 541V549" stroke="#000" stroke-width="1"/>
<path d="M517.5 541V545" stroke="#000" stroke-width="1"/>
<path d="M544.5 541V545" stroke="#000" stroke-width="1"/>
<path d="M572.5 541V545" stroke="#000" stroke-width="1"/>
<path d="M600.5 541V545" stroke="#000" stroke-width="1"/>
<path d="M627.5 541V549" stroke="#000" stroke-width="1"/>
<path d="M655.5 541V545" stroke="#000" stroke-width="1"/>
<path d="M682.5 541V545" stroke="#000" stroke-width="1"/>
<path d="M710.5 541V545" stroke="#000" stroke-width="1"/>
<path d="M738.5 541V545" stroke="#000" stroke-width="1"/>
<path d="M765.5 541V549" stroke="#000" stroke-width="1"/>
<path d="M793.5 541V545" stroke="#000" stroke-width="1"/>
<path d="M820.5 541V545" stroke="#000" stroke-width="1"/>
<path d="M848.5 541V545" stroke="#000" stroke-width="1"/>
<path d="M876.5 541V545" stroke="#000" stroke-width="1"/>
<path d="M903.5 541V549" stroke="#000" stroke-width="1"/>
<path d="M931.5 541V545" stroke="#000" stroke-width="1"/>
<path d="M958.5 541V545" stroke="#000" stroke-width="1"/>
<path d="M986.5 541V545" stroke="#000" stroke-width="1"/>
<path d="M1014.5 541V545" stroke="#000" stroke-width="1"/>
<path d="M1041.5 541V549" stroke="#000" stroke-width="1"/>
<path d="M1069.5 541V545" stroke="#000" stroke-width="1"/>
<path d="M1096.5 541V545" stroke="#000" stroke-width="1"/>
<path d="M1124.5 541V545" stroke="#000" stroke-width="1"/>
<path d="M1152.5 541V545" stroke="#000" stroke-width="1"/>
<path d="M1179.5 541V549" stroke="#000" stroke-width="1"/>
</svg>
<svg style="left:0;top:0" width="1205" height="718" viewBox="0 0 1205 718"><path d="M489.5 530.4 L494 529.6 L503 529.2 L511.9 528.6 L523.8 527.2 L544.8 525.3 L562.7 523.2 L574.6 521.2 L586.6 518.2 L598.5 515.3 L604.5 513.8 L615 513.5 L625.4 513.4 L632.9 512.3 L637.5 510.6 L641.9 508.1 L647.8 502.8 L655.3 495 L659.8 488.8 L665 481.5 L669.9 475.9 L674.4 470.8 L678.9 468.2 L684.1 467.1 L689.4 468.5 L695.3 473.6 L702.8 481.8 L707.3 488.3 L714.8 497.5 L720.7 504.2 L726.7 509 L731.2 512 L736.4 513 L741.6 511.8 L746.1 509 L750.6 503.5 L755.1 493.8 L758.6 483 L761.4 472.9 L763.3 462.4 L765.5 450.5 L767.2 440 L770.7 416.9 L774 386.8 L777.4 356.8 L780.7 326.7 L783.4 300 L785.7 274.3 L787.6 252.1 L789.8 229.8 L792.3 207.5 L795.1 185.2 L797.9 168.5 L800.1 159.2 L802.2 154.8 L804.3 153.3 L806.2 155 L807.7 158.9 L809.3 168.5 L811.8 185.2 L814.6 201.9 L816.9 218.6 L818.8 238.1 L820.8 257.6 L822.4 277.1 L824.7 299.4 L827.5 326.7 L830.2 356.8 L833.5 386.8 L837.5 416.9 L841.9 443.6 L846.9 467 L851.9 485.4 L856.9 498.7 L863.6 510.4 L873.6 520.2 L880 523.4 L887 525.6 L900.3 528.2 L916 529.6 L917 530.4 L937 530.4 L938 530.9 L1014 530.9 L1015 531.8 L1086 531.8 L1088 530.9 L1091 530.9 L1093 531.8 L1186 531.9" fill="none" stroke="#ff00ff" stroke-width="2" stroke-linejoin="round" stroke-linecap="butt" shape-rendering="crispEdges"/></svg>
<div class="t" style="left:420px;top:467px;width:47.21px;height:16px;line-height:16px;font-size:12.5px;letter-spacing:0.811px;text-align:right">100</div>
<div class="t" style="left:420px;top:409px;width:47.21px;height:16px;line-height:16px;font-size:12.5px;letter-spacing:0.811px;text-align:right">200</div>
<div class="t" style="left:420px;top:352px;width:47.21px;height:16px;line-height:16px;font-size:12.5px;letter-spacing:0.811px;text-align:right">300</div>
<div class="t" style="left:420px;top:294px;width:47.21px;height:16px;line-height:16px;font-size:12.5px;letter-spacing:0.811px;text-align:right">400</div>
<div class="t" style="left:420px;top:236px;width:47.21px;height:16px;line-height:16px;font-size:12.5px;letter-spacing:0.811px;text-align:right">500</div>
<div class="t" style="left:420px;top:178px;width:47.21px;height:16px;line-height:16px;font-size:12.5px;letter-spacing:0.811px;text-align:right">600</div>
<div class="t" style="left:420px;top:120px;width:47.21px;height:16px;line-height:16px;font-size:12.5px;letter-spacing:0.811px;text-align:right">700</div>
<div class="t" style="left:458.5px;top:552px;width:60px;height:16px;line-height:16px;font-size:12.5px;letter-spacing:0.811px;text-align:center;padding-left:0.81px">0</div>
<div class="t" style="left:596.5px;top:552px;width:60px;height:16px;line-height:16px;font-size:12.5px;letter-spacing:0.811px;text-align:center;padding-left:0.81px">50</div>
<div class="t" style="left:734.5px;top:552px;width:60px;height:16px;line-height:16px;font-size:12.5px;letter-spacing:0.811px;text-align:center;padding-left:0.81px">100</div>
<div class="t" style="left:872.5px;top:552px;width:60px;height:16px;line-height:16px;font-size:12.5px;letter-spacing:0.811px;text-align:center;padding-left:0.81px">150</div>
<div class="t" style="left:1010.5px;top:552px;width:60px;height:16px;line-height:16px;font-size:12.5px;letter-spacing:0.811px;text-align:center;padding-left:0.81px">200</div>
<div class="t" style="left:1148.5px;top:552px;width:60px;height:16px;line-height:16px;font-size:12.5px;letter-spacing:0.811px;text-align:center;padding-left:0.81px">250</div>
<div class="t" style="left:736px;top:568px;width:200px;height:18px;line-height:18px;font-size:14.6px;font-weight:bold;text-align:center">Time [a.u.]</div>
<div class="t" style="left:331px;top:315px;width:200px;height:18px;line-height:18px;font-size:14.6px;font-weight:bold;text-align:center;transform:rotate(-90deg)">I(t) [a.u.]</div>
<div style="left:767px;top:598px;width:8px;height:8px;background:#ff00ff;"></div>
<div class="t" style="left:781px;top:593px;width:140px;height:18px;line-height:18px;font-size:13px;color:#000;text-align:left;"><span class="r" style="width:26.08px;letter-spacing:0.02px;text-indent:0.01px">BSA</span><span class="r" style="width:6.50px;letter-spacing:-0.73px;text-indent:-0.36px">_</span><span class="r" style="width:16.54px;letter-spacing:1.04px;text-indent:0.52px">20</span><span class="r" style="width:6.50px;letter-spacing:-0.73px;text-indent:-0.36px">_</span><span class="r" style="width:24.81px;letter-spacing:1.04px;text-indent:0.52px">280</span><span class="r" style="width:6.50px;letter-spacing:-0.73px;text-indent:-0.36px">_</span><span class="r" style="width:38.55px;letter-spacing:1.06px;text-indent:0.53px">frame</span></div>
<div class="b" style="left:411px;top:621px;width:163px;height:23px"><i></i></div>
<div class="t" style="left:411px;top:621px;width:163px;height:23px;line-height:23px;font-size:13px;color:#f00;text-align:center;"><span class="r" style="width:8.90px;letter-spacing:-0.49px;text-indent:-0.24px">C</span><span class="r" style="width:81.29px;letter-spacing:0.81px;text-indent:0.41px">oncentration</span><span class="r" style="width:4.05px"> </span><span class="r" style="width:60.88px;letter-spacing:0.66px;text-indent:0.33px">reference</span></div>
<div class="b" style="left:574px;top:621px;width:157px;height:23px"><i></i></div>
<div class="t" style="left:574px;top:621px;width:157px;height:23px;line-height:23px;font-size:13px;color:#f00;text-align:center;"><span class="r" style="width:8.86px;letter-spacing:-0.53px;text-indent:-0.26px">R</span><span class="r" style="width:52.20px;letter-spacing:0.56px;text-indent:0.28px">esiduals</span></div>
<div class="b" style="left:731px;top:621px;width:157px;height:23px"><i></i></div>
<div class="t" style="left:731px;top:621px;width:157px;height:23px;line-height:23px;font-size:13px;color:#f00;text-align:center;"><span class="r" style="width:24.10px;letter-spacing:-0.64px;text-indent:-0.32px">PVP</span><span class="r" style="width:4.05px"> </span><span class="r" style="width:8.72px;letter-spacing:0.05px;text-indent:0.03px">A</span><span class="r" style="width:43.81px;letter-spacing:0.58px;text-indent:0.29px">nalysis</span></div>
<div class="b" style="left:888px;top:621px;width:157px;height:23px"><i></i></div>
<div class="t" style="left:888px;top:621px;width:157px;height:23px;line-height:23px;font-size:13px;color:#f00;text-align:center;"><span class="r" style="width:8.90px;letter-spacing:-0.49px;text-indent:-0.24px">C</span><span class="r" style="width:34.29px;letter-spacing:0.64px;text-indent:0.32px">ancel</span></div>
<div class="b" style="left:1045px;top:621px;width:157px;height:23px"><i></i></div>
<div class="t" style="left:1045px;top:621px;width:157px;height:23px;line-height:23px;font-size:13px;color:#f00;text-align:center;"><span class="r" style="width:8.36px;letter-spacing:-0.31px;text-indent:-0.16px">K</span><span class="r" style="width:23.78px;letter-spacing:0.70px;text-indent:0.35px">eep</span></div>
<div class="b" style="left:411px;top:644px;width:264px;height:23px"><i></i></div>
<div class="t" style="left:411px;top:644px;width:264px;height:23px;line-height:23px;font-size:13px;color:#f00;text-align:center;"><span class="r" style="width:8.75px;letter-spacing:0.08px;text-indent:0.04px">B</span><span class="r" style="width:33.46px;letter-spacing:0.62px;text-indent:0.31px">lanks</span><span class="r" style="width:4.05px"> </span><span class="r" style="width:51.62px;letter-spacing:0.58px;text-indent:0.29px">analysis</span></div>
<div class="b" style="left:675px;top:644px;width:263px;height:23px"><i></i></div>
<div class="t" style="left:675px;top:644px;width:263px;height:23px;line-height:23px;font-size:13px;color:#f00;text-align:center;"><span class="r" style="width:8.75px;letter-spacing:0.08px;text-indent:0.04px">B</span><span class="r" style="width:45.31px;letter-spacing:0.59px;text-indent:0.29px">aseline</span></div>
<div class="b" style="left:938px;top:644px;width:264px;height:23px"><i></i></div>
<div class="t" style="left:938px;top:644px;width:264px;height:23px;line-height:23px;font-size:13px;color:#f00;text-align:center;"><span class="r" style="width:8.75px;letter-spacing:0.08px;text-indent:0.04px">B</span><span class="r" style="width:45.31px;letter-spacing:0.59px;text-indent:0.29px">aseline</span><span class="r" style="width:4.05px"> </span><span class="r" style="width:35.09px;letter-spacing:0.80px;text-indent:0.40px">apply</span></div>
<div class="b" style="left:411px;top:667px;width:132px;height:23px"><i></i></div>
<div class="t" style="left:411px;top:667px;width:132px;height:23px;line-height:23px;font-size:13px;color:#000;text-align:center;"><span class="r" style="width:9.92px;letter-spacing:-0.19px;text-indent:-0.10px">G</span><span class="r" style="width:48.80px;letter-spacing:0.57px;text-indent:0.29px">aussian</span><span class="r" style="width:4.07px"> </span><span class="r" style="width:47.14px;letter-spacing:0.75px;text-indent:0.37px">options</span></div>
<div class="b" style="left:543px;top:667px;width:132px;height:23px"><i></i></div>
<div class="t" style="left:543px;top:667px;width:132px;height:23px;line-height:23px;font-size:13px;color:#000;text-align:center;"><span class="r" style="width:9.92px;letter-spacing:-0.19px;text-indent:-0.10px">G</span><span class="r" style="width:55.47px;letter-spacing:0.52px;text-indent:0.26px">aussians</span></div>
<div class="b" style="left:675px;top:667px;width:131px;height:23px"><i></i></div>
<div class="t" style="left:675px;top:667px;width:131px;height:23px;line-height:23px;font-size:13px;color:#f00;text-align:center;"><span class="r" style="width:9.92px;letter-spacing:-0.19px;text-indent:-0.10px">G</span><span class="r" style="width:30.91px;letter-spacing:0.69px;text-indent:0.34px">lobal</span><span class="r" style="width:4.07px"> </span><span class="r" style="width:9.92px;letter-spacing:-0.19px;text-indent:-0.10px">G</span><span class="r" style="width:55.47px;letter-spacing:0.52px;text-indent:0.26px">aussians</span></div>
<div class="b" style="left:806px;top:667px;width:132px;height:23px"><i></i></div>
<div class="t" style="left:806px;top:667px;width:132px;height:23px;line-height:23px;font-size:13px;color:#f00;text-align:center;"><span class="r" style="width:8.13px;letter-spacing:-0.55px;text-indent:-0.27px">S</span><span class="r" style="width:26.31px;letter-spacing:0.62px;text-indent:0.31px">cale</span><span class="r" style="width:4.07px"> </span><span class="r" style="width:8.76px;letter-spacing:0.08px;text-indent:0.04px">A</span><span class="r" style="width:43.98px;letter-spacing:0.61px;text-indent:0.30px">nalysis</span></div>
<div class="b" style="left:938px;top:667px;width:132px;height:23px"><i></i></div>
<div class="t" style="left:938px;top:667px;width:132px;height:23px;line-height:23px;font-size:13px;color:#f00;text-align:center;"><span class="r" style="width:7.82px;letter-spacing:-0.12px;text-indent:-0.06px">T</span><span class="r" style="width:20.22px;letter-spacing:0.72px;text-indent:0.36px">rial</span><span class="r" style="width:4.07px"> </span><span class="r" style="width:35.14px;letter-spacing:0.84px;text-indent:0.42px">make</span><span class="r" style="width:4.07px"> </span><span class="r" style="width:3.78px;letter-spacing:0.16px;text-indent:0.08px">I</span><span class="r" style="width:4.99px;letter-spacing:0.67px;text-indent:0.33px">(</span><span class="r" style="width:8.13px;letter-spacing:0.90px;text-indent:0.45px">q</span><span class="r" style="width:4.99px;letter-spacing:0.67px;text-indent:0.33px">)</span></div>
<div class="b" style="left:1070px;top:667px;width:132px;height:23px"><i></i></div>
<div class="t" style="left:1070px;top:667px;width:132px;height:23px;line-height:23px;font-size:13px;color:#f00;text-align:center;"><span class="r" style="width:9.92px;letter-spacing:-0.19px;text-indent:-0.10px">G</span><span class="r" style="width:36.47px;letter-spacing:0.78px;text-indent:0.39px">uinier</span></div>
</div></body></html>
